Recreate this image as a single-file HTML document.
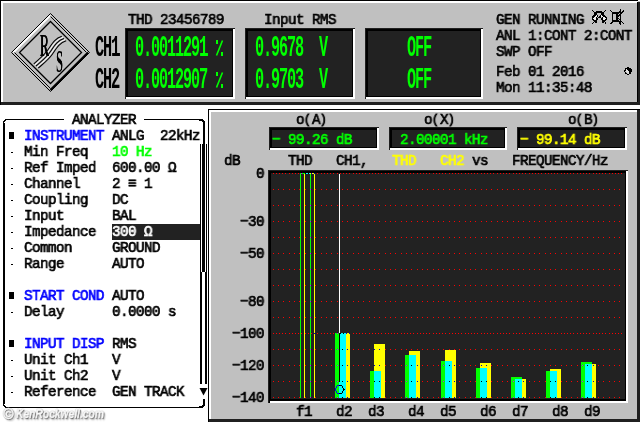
<!DOCTYPE html>
<html><head><meta charset="utf-8"><style>
html,body{margin:0;padding:0;}
body{width:640px;height:422px;overflow:hidden;position:relative;background:#fff;}
.a{position:absolute;}
.t{position:absolute;font-family:"Liberation Mono",monospace;font-weight:normal;font-size:15.2px;line-height:16px;white-space:pre;letter-spacing:-0.609px;-webkit-text-stroke-width:0.7px;transform:scaleX(0.94);transform-origin:0 0;will-change:transform;}
.g{position:absolute;font-family:"Liberation Mono",monospace;font-weight:bold;font-size:30.4px;line-height:32px;white-space:pre;letter-spacing:-2.24px;transform:scaleX(0.5);transform-origin:0 0;will-change:transform;}
.lg{position:absolute;font-family:"Liberation Serif",serif;font-weight:bold;font-size:30.5px;line-height:30px;transform:scaleX(0.41);transform-origin:0 0;will-change:transform;}
.pp{font-size:12px;letter-spacing:1.28px;position:relative;top:-1px;-webkit-text-stroke-width:0.9px;}
.wm{position:absolute;font-family:"Liberation Sans",sans-serif;font-weight:bold;font-style:italic;font-size:13px;line-height:16px;color:#fbfbfb;-webkit-text-stroke:0.5px #f4f4f4;text-shadow:0 0 1px #444,1px 1px 1px #666,2px 2px 2px #aaa;white-space:pre;will-change:transform;}
</style></head><body>
<svg class="a" width="640" height="422" viewBox="0 0 640 422" shape-rendering="crispEdges" style="left:0;top:0"><rect x="0" y="0" width="640" height="422" fill="#ffffff"/><rect x="0" y="0" width="640" height="105" fill="#c0c0c0"/><rect x="0" y="0" width="640" height="1" fill="#000"/><rect x="0" y="0" width="1" height="105" fill="#000"/><rect x="1" y="1" width="636" height="2" fill="#fff"/><rect x="1" y="1" width="2" height="101" fill="#fff"/><rect x="637" y="2" width="3" height="103" fill="#202020"/><rect x="637" y="2" width="1" height="100" fill="#000"/><rect x="1" y="102" width="639" height="3" fill="#202020"/><rect x="125" y="28" width="110" height="71" fill="#222222"/><rect x="125" y="28" width="110" height="3" fill="#000"/><rect x="125" y="28" width="3" height="71" fill="#000"/><rect x="125" y="28" width="110" height="1" fill="#202020"/><rect x="125" y="28" width="1" height="71" fill="#202020"/><rect x="126" y="97" width="109" height="2" fill="#fff"/><rect x="233" y="29" width="2" height="70" fill="#fff"/><rect x="128" y="96" width="105" height="1" fill="#000"/><rect x="232" y="31" width="1" height="66" fill="#000"/><rect x="245" y="28" width="110" height="71" fill="#222222"/><rect x="245" y="28" width="110" height="3" fill="#000"/><rect x="245" y="28" width="3" height="71" fill="#000"/><rect x="245" y="28" width="110" height="1" fill="#202020"/><rect x="245" y="28" width="1" height="71" fill="#202020"/><rect x="246" y="97" width="109" height="2" fill="#fff"/><rect x="353" y="29" width="2" height="70" fill="#fff"/><rect x="248" y="96" width="105" height="1" fill="#000"/><rect x="352" y="31" width="1" height="66" fill="#000"/><rect x="365" y="28" width="118" height="71" fill="#222222"/><rect x="365" y="28" width="118" height="3" fill="#000"/><rect x="365" y="28" width="3" height="71" fill="#000"/><rect x="365" y="28" width="118" height="1" fill="#202020"/><rect x="365" y="28" width="1" height="71" fill="#202020"/><rect x="366" y="97" width="117" height="2" fill="#fff"/><rect x="481" y="29" width="2" height="70" fill="#fff"/><rect x="368" y="96" width="113" height="1" fill="#000"/><rect x="480" y="31" width="1" height="66" fill="#000"/><rect x="216" y="40" width="2" height="4" fill="#00ff00"/><rect x="221" y="52" width="2" height="4" fill="#00ff00"/><path d="M222.5 40.5 L216.5 55.5" stroke="#00ff00" stroke-width="1.6" shape-rendering="auto"/><rect x="216" y="72" width="2" height="4" fill="#00ff00"/><rect x="221" y="84" width="2" height="4" fill="#00ff00"/><path d="M222.5 72.5 L216.5 87.5" stroke="#00ff00" stroke-width="1.6" shape-rendering="auto"/><rect x="208" y="109" width="432" height="313" fill="#c0c0c0"/><rect x="208" y="109" width="432" height="1" fill="#000"/><rect x="208" y="109" width="1" height="313" fill="#000"/><rect x="209" y="110" width="428" height="2" fill="#fff"/><rect x="209" y="110" width="2" height="309" fill="#fff"/><rect x="637" y="110" width="3" height="312" fill="#202020"/><rect x="209" y="419" width="431" height="3" fill="#202020"/><rect x="269" y="127" width="110" height="23" fill="#222222"/><rect x="269" y="127" width="110" height="3" fill="#000"/><rect x="269" y="127" width="3" height="23" fill="#000"/><rect x="269" y="127" width="110" height="1" fill="#202020"/><rect x="269" y="127" width="1" height="23" fill="#202020"/><rect x="270" y="148" width="109" height="2" fill="#fff"/><rect x="377" y="128" width="2" height="22" fill="#fff"/><rect x="272" y="147" width="105" height="1" fill="#000"/><rect x="376" y="130" width="1" height="18" fill="#000"/><rect x="389" y="127" width="118" height="23" fill="#222222"/><rect x="389" y="127" width="118" height="3" fill="#000"/><rect x="389" y="127" width="3" height="23" fill="#000"/><rect x="389" y="127" width="118" height="1" fill="#202020"/><rect x="389" y="127" width="1" height="23" fill="#202020"/><rect x="390" y="148" width="117" height="2" fill="#fff"/><rect x="505" y="128" width="2" height="22" fill="#fff"/><rect x="392" y="147" width="113" height="1" fill="#000"/><rect x="504" y="130" width="1" height="18" fill="#000"/><rect x="517" y="127" width="110" height="23" fill="#222222"/><rect x="517" y="127" width="110" height="3" fill="#000"/><rect x="517" y="127" width="3" height="23" fill="#000"/><rect x="517" y="127" width="110" height="1" fill="#202020"/><rect x="517" y="127" width="1" height="23" fill="#202020"/><rect x="518" y="148" width="109" height="2" fill="#fff"/><rect x="625" y="128" width="2" height="22" fill="#fff"/><rect x="520" y="147" width="105" height="1" fill="#000"/><rect x="624" y="130" width="1" height="18" fill="#000"/><rect x="268" y="170" width="360" height="233" fill="#222222"/><rect x="268" y="170" width="360" height="3" fill="#000"/><rect x="268" y="170" width="3" height="233" fill="#000"/><rect x="268" y="170" width="360" height="1" fill="#202020"/><rect x="268" y="170" width="1" height="233" fill="#202020"/><rect x="270" y="401" width="358" height="2" fill="#fff"/><rect x="626" y="171" width="2" height="232" fill="#fff"/><rect x="271" y="399" width="355" height="2" fill="#000"/><rect x="625" y="173" width="1" height="228" fill="#000"/><rect x="112" y="224" width="89" height="16" fill="#222222"/><rect x="9" y="132" width="5" height="7" fill="#000"/><rect x="11" y="152" width="2" height="1" fill="#000"/><rect x="11" y="168" width="2" height="1" fill="#000"/><rect x="11" y="184" width="2" height="1" fill="#000"/><rect x="11" y="200" width="2" height="1" fill="#000"/><rect x="11" y="216" width="2" height="1" fill="#000"/><rect x="11" y="232" width="2" height="1" fill="#000"/><rect x="11" y="248" width="2" height="1" fill="#000"/><rect x="11" y="264" width="2" height="1" fill="#000"/><rect x="9" y="292" width="5" height="7" fill="#000"/><rect x="11" y="312" width="2" height="1" fill="#000"/><rect x="9" y="340" width="5" height="7" fill="#000"/><rect x="11" y="360" width="2" height="1" fill="#000"/><rect x="11" y="376" width="2" height="1" fill="#000"/><rect x="11" y="392" width="2" height="1" fill="#000"/><rect x="3" y="123" width="2" height="281" fill="#000"/><rect x="8" y="407" width="192" height="1" fill="#000"/><rect x="8" y="119" width="56" height="1" fill="#000"/><rect x="144" y="119" width="56" height="1" fill="#000"/><rect x="203" y="123" width="2" height="21" fill="#000"/><rect x="203" y="399" width="2" height="5" fill="#000"/><path d="M3.5 124 Q3.5 119.5 8 119.5" stroke="#000" fill="none" stroke-width="1.5"/><path d="M199 119.5 Q204 119.5 204 124" stroke="#000" fill="none" stroke-width="2"/><path d="M3.5 403 Q3.5 407.5 8 407.5" stroke="#000" fill="none" stroke-width="1.5"/><path d="M199 407.5 Q204 407.5 204 403" stroke="#000" fill="none" stroke-width="2"/><rect x="200" y="144" width="2" height="240" fill="#000"/><rect x="205" y="144" width="2" height="240" fill="#000"/><rect x="202" y="144" width="3" height="128" fill="#000"/><rect x="201" y="144" width="1" height="128" fill="#fff"/><rect x="205" y="144" width="1" height="128" fill="#fff"/><polygon points="199.5,388 207.5,388 203.5,395.5" fill="#000" shape-rendering="auto"/><rect x="273" y="173" width="1" height="1" fill="#ff0000"/><rect x="276" y="173" width="1" height="1" fill="#ff0000"/><rect x="279" y="173" width="1" height="1" fill="#ff0000"/><rect x="282" y="173" width="1" height="1" fill="#ff0000"/><rect x="285" y="173" width="1" height="1" fill="#ff0000"/><rect x="289" y="173" width="1" height="1" fill="#ff0000"/><rect x="292" y="173" width="1" height="1" fill="#ff0000"/><rect x="295" y="173" width="1" height="1" fill="#ff0000"/><rect x="298" y="173" width="1" height="1" fill="#ff0000"/><rect x="301" y="173" width="1" height="1" fill="#ff0000"/><rect x="305" y="173" width="1" height="1" fill="#ff0000"/><rect x="308" y="173" width="1" height="1" fill="#ff0000"/><rect x="311" y="173" width="1" height="1" fill="#ff0000"/><rect x="314" y="173" width="1" height="1" fill="#ff0000"/><rect x="317" y="173" width="1" height="1" fill="#ff0000"/><rect x="321" y="173" width="1" height="1" fill="#ff0000"/><rect x="324" y="173" width="1" height="1" fill="#ff0000"/><rect x="327" y="173" width="1" height="1" fill="#ff0000"/><rect x="330" y="173" width="1" height="1" fill="#ff0000"/><rect x="333" y="173" width="1" height="1" fill="#ff0000"/><rect x="337" y="173" width="1" height="1" fill="#ff0000"/><rect x="340" y="173" width="1" height="1" fill="#ff0000"/><rect x="343" y="173" width="1" height="1" fill="#ff0000"/><rect x="346" y="173" width="1" height="1" fill="#ff0000"/><rect x="349" y="173" width="1" height="1" fill="#ff0000"/><rect x="353" y="173" width="1" height="1" fill="#ff0000"/><rect x="356" y="173" width="1" height="1" fill="#ff0000"/><rect x="359" y="173" width="1" height="1" fill="#ff0000"/><rect x="362" y="173" width="1" height="1" fill="#ff0000"/><rect x="365" y="173" width="1" height="1" fill="#ff0000"/><rect x="369" y="173" width="1" height="1" fill="#ff0000"/><rect x="372" y="173" width="1" height="1" fill="#ff0000"/><rect x="375" y="173" width="1" height="1" fill="#ff0000"/><rect x="378" y="173" width="1" height="1" fill="#ff0000"/><rect x="381" y="173" width="1" height="1" fill="#ff0000"/><rect x="385" y="173" width="1" height="1" fill="#ff0000"/><rect x="388" y="173" width="1" height="1" fill="#ff0000"/><rect x="391" y="173" width="1" height="1" fill="#ff0000"/><rect x="394" y="173" width="1" height="1" fill="#ff0000"/><rect x="397" y="173" width="1" height="1" fill="#ff0000"/><rect x="401" y="173" width="1" height="1" fill="#ff0000"/><rect x="404" y="173" width="1" height="1" fill="#ff0000"/><rect x="407" y="173" width="1" height="1" fill="#ff0000"/><rect x="410" y="173" width="1" height="1" fill="#ff0000"/><rect x="413" y="173" width="1" height="1" fill="#ff0000"/><rect x="417" y="173" width="1" height="1" fill="#ff0000"/><rect x="420" y="173" width="1" height="1" fill="#ff0000"/><rect x="423" y="173" width="1" height="1" fill="#ff0000"/><rect x="426" y="173" width="1" height="1" fill="#ff0000"/><rect x="429" y="173" width="1" height="1" fill="#ff0000"/><rect x="433" y="173" width="1" height="1" fill="#ff0000"/><rect x="436" y="173" width="1" height="1" fill="#ff0000"/><rect x="439" y="173" width="1" height="1" fill="#ff0000"/><rect x="442" y="173" width="1" height="1" fill="#ff0000"/><rect x="445" y="173" width="1" height="1" fill="#ff0000"/><rect x="449" y="173" width="1" height="1" fill="#ff0000"/><rect x="452" y="173" width="1" height="1" fill="#ff0000"/><rect x="455" y="173" width="1" height="1" fill="#ff0000"/><rect x="458" y="173" width="1" height="1" fill="#ff0000"/><rect x="461" y="173" width="1" height="1" fill="#ff0000"/><rect x="465" y="173" width="1" height="1" fill="#ff0000"/><rect x="468" y="173" width="1" height="1" fill="#ff0000"/><rect x="471" y="173" width="1" height="1" fill="#ff0000"/><rect x="474" y="173" width="1" height="1" fill="#ff0000"/><rect x="477" y="173" width="1" height="1" fill="#ff0000"/><rect x="481" y="173" width="1" height="1" fill="#ff0000"/><rect x="484" y="173" width="1" height="1" fill="#ff0000"/><rect x="487" y="173" width="1" height="1" fill="#ff0000"/><rect x="490" y="173" width="1" height="1" fill="#ff0000"/><rect x="493" y="173" width="1" height="1" fill="#ff0000"/><rect x="497" y="173" width="1" height="1" fill="#ff0000"/><rect x="500" y="173" width="1" height="1" fill="#ff0000"/><rect x="503" y="173" width="1" height="1" fill="#ff0000"/><rect x="506" y="173" width="1" height="1" fill="#ff0000"/><rect x="509" y="173" width="1" height="1" fill="#ff0000"/><rect x="513" y="173" width="1" height="1" fill="#ff0000"/><rect x="516" y="173" width="1" height="1" fill="#ff0000"/><rect x="519" y="173" width="1" height="1" fill="#ff0000"/><rect x="522" y="173" width="1" height="1" fill="#ff0000"/><rect x="525" y="173" width="1" height="1" fill="#ff0000"/><rect x="529" y="173" width="1" height="1" fill="#ff0000"/><rect x="532" y="173" width="1" height="1" fill="#ff0000"/><rect x="535" y="173" width="1" height="1" fill="#ff0000"/><rect x="538" y="173" width="1" height="1" fill="#ff0000"/><rect x="541" y="173" width="1" height="1" fill="#ff0000"/><rect x="545" y="173" width="1" height="1" fill="#ff0000"/><rect x="548" y="173" width="1" height="1" fill="#ff0000"/><rect x="551" y="173" width="1" height="1" fill="#ff0000"/><rect x="554" y="173" width="1" height="1" fill="#ff0000"/><rect x="557" y="173" width="1" height="1" fill="#ff0000"/><rect x="561" y="173" width="1" height="1" fill="#ff0000"/><rect x="564" y="173" width="1" height="1" fill="#ff0000"/><rect x="567" y="173" width="1" height="1" fill="#ff0000"/><rect x="570" y="173" width="1" height="1" fill="#ff0000"/><rect x="573" y="173" width="1" height="1" fill="#ff0000"/><rect x="577" y="173" width="1" height="1" fill="#ff0000"/><rect x="580" y="173" width="1" height="1" fill="#ff0000"/><rect x="583" y="173" width="1" height="1" fill="#ff0000"/><rect x="586" y="173" width="1" height="1" fill="#ff0000"/><rect x="589" y="173" width="1" height="1" fill="#ff0000"/><rect x="593" y="173" width="1" height="1" fill="#ff0000"/><rect x="596" y="173" width="1" height="1" fill="#ff0000"/><rect x="599" y="173" width="1" height="1" fill="#ff0000"/><rect x="602" y="173" width="1" height="1" fill="#ff0000"/><rect x="605" y="173" width="1" height="1" fill="#ff0000"/><rect x="609" y="173" width="1" height="1" fill="#ff0000"/><rect x="612" y="173" width="1" height="1" fill="#ff0000"/><rect x="615" y="173" width="1" height="1" fill="#ff0000"/><rect x="618" y="173" width="1" height="1" fill="#ff0000"/><rect x="621" y="173" width="1" height="1" fill="#ff0000"/><rect x="273" y="189" width="1" height="1" fill="#ff0000"/><rect x="278" y="189" width="1" height="1" fill="#ff0000"/><rect x="283" y="189" width="1" height="1" fill="#ff0000"/><rect x="289" y="189" width="1" height="1" fill="#ff0000"/><rect x="294" y="189" width="1" height="1" fill="#ff0000"/><rect x="299" y="189" width="1" height="1" fill="#ff0000"/><rect x="305" y="189" width="1" height="1" fill="#ff0000"/><rect x="310" y="189" width="1" height="1" fill="#ff0000"/><rect x="315" y="189" width="1" height="1" fill="#ff0000"/><rect x="321" y="189" width="1" height="1" fill="#ff0000"/><rect x="326" y="189" width="1" height="1" fill="#ff0000"/><rect x="331" y="189" width="1" height="1" fill="#ff0000"/><rect x="337" y="189" width="1" height="1" fill="#ff0000"/><rect x="342" y="189" width="1" height="1" fill="#ff0000"/><rect x="347" y="189" width="1" height="1" fill="#ff0000"/><rect x="353" y="189" width="1" height="1" fill="#ff0000"/><rect x="358" y="189" width="1" height="1" fill="#ff0000"/><rect x="363" y="189" width="1" height="1" fill="#ff0000"/><rect x="369" y="189" width="1" height="1" fill="#ff0000"/><rect x="374" y="189" width="1" height="1" fill="#ff0000"/><rect x="379" y="189" width="1" height="1" fill="#ff0000"/><rect x="385" y="189" width="1" height="1" fill="#ff0000"/><rect x="390" y="189" width="1" height="1" fill="#ff0000"/><rect x="395" y="189" width="1" height="1" fill="#ff0000"/><rect x="401" y="189" width="1" height="1" fill="#ff0000"/><rect x="406" y="189" width="1" height="1" fill="#ff0000"/><rect x="411" y="189" width="1" height="1" fill="#ff0000"/><rect x="417" y="189" width="1" height="1" fill="#ff0000"/><rect x="422" y="189" width="1" height="1" fill="#ff0000"/><rect x="427" y="189" width="1" height="1" fill="#ff0000"/><rect x="433" y="189" width="1" height="1" fill="#ff0000"/><rect x="438" y="189" width="1" height="1" fill="#ff0000"/><rect x="443" y="189" width="1" height="1" fill="#ff0000"/><rect x="449" y="189" width="1" height="1" fill="#ff0000"/><rect x="454" y="189" width="1" height="1" fill="#ff0000"/><rect x="459" y="189" width="1" height="1" fill="#ff0000"/><rect x="465" y="189" width="1" height="1" fill="#ff0000"/><rect x="470" y="189" width="1" height="1" fill="#ff0000"/><rect x="475" y="189" width="1" height="1" fill="#ff0000"/><rect x="481" y="189" width="1" height="1" fill="#ff0000"/><rect x="486" y="189" width="1" height="1" fill="#ff0000"/><rect x="491" y="189" width="1" height="1" fill="#ff0000"/><rect x="497" y="189" width="1" height="1" fill="#ff0000"/><rect x="502" y="189" width="1" height="1" fill="#ff0000"/><rect x="507" y="189" width="1" height="1" fill="#ff0000"/><rect x="513" y="189" width="1" height="1" fill="#ff0000"/><rect x="518" y="189" width="1" height="1" fill="#ff0000"/><rect x="523" y="189" width="1" height="1" fill="#ff0000"/><rect x="529" y="189" width="1" height="1" fill="#ff0000"/><rect x="534" y="189" width="1" height="1" fill="#ff0000"/><rect x="539" y="189" width="1" height="1" fill="#ff0000"/><rect x="545" y="189" width="1" height="1" fill="#ff0000"/><rect x="550" y="189" width="1" height="1" fill="#ff0000"/><rect x="555" y="189" width="1" height="1" fill="#ff0000"/><rect x="561" y="189" width="1" height="1" fill="#ff0000"/><rect x="566" y="189" width="1" height="1" fill="#ff0000"/><rect x="571" y="189" width="1" height="1" fill="#ff0000"/><rect x="577" y="189" width="1" height="1" fill="#ff0000"/><rect x="582" y="189" width="1" height="1" fill="#ff0000"/><rect x="587" y="189" width="1" height="1" fill="#ff0000"/><rect x="593" y="189" width="1" height="1" fill="#ff0000"/><rect x="598" y="189" width="1" height="1" fill="#ff0000"/><rect x="603" y="189" width="1" height="1" fill="#ff0000"/><rect x="609" y="189" width="1" height="1" fill="#ff0000"/><rect x="614" y="189" width="1" height="1" fill="#ff0000"/><rect x="619" y="189" width="1" height="1" fill="#ff0000"/><rect x="273" y="205" width="1" height="1" fill="#ff0000"/><rect x="278" y="205" width="1" height="1" fill="#ff0000"/><rect x="283" y="205" width="1" height="1" fill="#ff0000"/><rect x="289" y="205" width="1" height="1" fill="#ff0000"/><rect x="294" y="205" width="1" height="1" fill="#ff0000"/><rect x="299" y="205" width="1" height="1" fill="#ff0000"/><rect x="305" y="205" width="1" height="1" fill="#ff0000"/><rect x="310" y="205" width="1" height="1" fill="#ff0000"/><rect x="315" y="205" width="1" height="1" fill="#ff0000"/><rect x="321" y="205" width="1" height="1" fill="#ff0000"/><rect x="326" y="205" width="1" height="1" fill="#ff0000"/><rect x="331" y="205" width="1" height="1" fill="#ff0000"/><rect x="337" y="205" width="1" height="1" fill="#ff0000"/><rect x="342" y="205" width="1" height="1" fill="#ff0000"/><rect x="347" y="205" width="1" height="1" fill="#ff0000"/><rect x="353" y="205" width="1" height="1" fill="#ff0000"/><rect x="358" y="205" width="1" height="1" fill="#ff0000"/><rect x="363" y="205" width="1" height="1" fill="#ff0000"/><rect x="369" y="205" width="1" height="1" fill="#ff0000"/><rect x="374" y="205" width="1" height="1" fill="#ff0000"/><rect x="379" y="205" width="1" height="1" fill="#ff0000"/><rect x="385" y="205" width="1" height="1" fill="#ff0000"/><rect x="390" y="205" width="1" height="1" fill="#ff0000"/><rect x="395" y="205" width="1" height="1" fill="#ff0000"/><rect x="401" y="205" width="1" height="1" fill="#ff0000"/><rect x="406" y="205" width="1" height="1" fill="#ff0000"/><rect x="411" y="205" width="1" height="1" fill="#ff0000"/><rect x="417" y="205" width="1" height="1" fill="#ff0000"/><rect x="422" y="205" width="1" height="1" fill="#ff0000"/><rect x="427" y="205" width="1" height="1" fill="#ff0000"/><rect x="433" y="205" width="1" height="1" fill="#ff0000"/><rect x="438" y="205" width="1" height="1" fill="#ff0000"/><rect x="443" y="205" width="1" height="1" fill="#ff0000"/><rect x="449" y="205" width="1" height="1" fill="#ff0000"/><rect x="454" y="205" width="1" height="1" fill="#ff0000"/><rect x="459" y="205" width="1" height="1" fill="#ff0000"/><rect x="465" y="205" width="1" height="1" fill="#ff0000"/><rect x="470" y="205" width="1" height="1" fill="#ff0000"/><rect x="475" y="205" width="1" height="1" fill="#ff0000"/><rect x="481" y="205" width="1" height="1" fill="#ff0000"/><rect x="486" y="205" width="1" height="1" fill="#ff0000"/><rect x="491" y="205" width="1" height="1" fill="#ff0000"/><rect x="497" y="205" width="1" height="1" fill="#ff0000"/><rect x="502" y="205" width="1" height="1" fill="#ff0000"/><rect x="507" y="205" width="1" height="1" fill="#ff0000"/><rect x="513" y="205" width="1" height="1" fill="#ff0000"/><rect x="518" y="205" width="1" height="1" fill="#ff0000"/><rect x="523" y="205" width="1" height="1" fill="#ff0000"/><rect x="529" y="205" width="1" height="1" fill="#ff0000"/><rect x="534" y="205" width="1" height="1" fill="#ff0000"/><rect x="539" y="205" width="1" height="1" fill="#ff0000"/><rect x="545" y="205" width="1" height="1" fill="#ff0000"/><rect x="550" y="205" width="1" height="1" fill="#ff0000"/><rect x="555" y="205" width="1" height="1" fill="#ff0000"/><rect x="561" y="205" width="1" height="1" fill="#ff0000"/><rect x="566" y="205" width="1" height="1" fill="#ff0000"/><rect x="571" y="205" width="1" height="1" fill="#ff0000"/><rect x="577" y="205" width="1" height="1" fill="#ff0000"/><rect x="582" y="205" width="1" height="1" fill="#ff0000"/><rect x="587" y="205" width="1" height="1" fill="#ff0000"/><rect x="593" y="205" width="1" height="1" fill="#ff0000"/><rect x="598" y="205" width="1" height="1" fill="#ff0000"/><rect x="603" y="205" width="1" height="1" fill="#ff0000"/><rect x="609" y="205" width="1" height="1" fill="#ff0000"/><rect x="614" y="205" width="1" height="1" fill="#ff0000"/><rect x="619" y="205" width="1" height="1" fill="#ff0000"/><rect x="273" y="221" width="1" height="1" fill="#ff0000"/><rect x="278" y="221" width="1" height="1" fill="#ff0000"/><rect x="283" y="221" width="1" height="1" fill="#ff0000"/><rect x="289" y="221" width="1" height="1" fill="#ff0000"/><rect x="294" y="221" width="1" height="1" fill="#ff0000"/><rect x="299" y="221" width="1" height="1" fill="#ff0000"/><rect x="305" y="221" width="1" height="1" fill="#ff0000"/><rect x="310" y="221" width="1" height="1" fill="#ff0000"/><rect x="315" y="221" width="1" height="1" fill="#ff0000"/><rect x="321" y="221" width="1" height="1" fill="#ff0000"/><rect x="326" y="221" width="1" height="1" fill="#ff0000"/><rect x="331" y="221" width="1" height="1" fill="#ff0000"/><rect x="337" y="221" width="1" height="1" fill="#ff0000"/><rect x="342" y="221" width="1" height="1" fill="#ff0000"/><rect x="347" y="221" width="1" height="1" fill="#ff0000"/><rect x="353" y="221" width="1" height="1" fill="#ff0000"/><rect x="358" y="221" width="1" height="1" fill="#ff0000"/><rect x="363" y="221" width="1" height="1" fill="#ff0000"/><rect x="369" y="221" width="1" height="1" fill="#ff0000"/><rect x="374" y="221" width="1" height="1" fill="#ff0000"/><rect x="379" y="221" width="1" height="1" fill="#ff0000"/><rect x="385" y="221" width="1" height="1" fill="#ff0000"/><rect x="390" y="221" width="1" height="1" fill="#ff0000"/><rect x="395" y="221" width="1" height="1" fill="#ff0000"/><rect x="401" y="221" width="1" height="1" fill="#ff0000"/><rect x="406" y="221" width="1" height="1" fill="#ff0000"/><rect x="411" y="221" width="1" height="1" fill="#ff0000"/><rect x="417" y="221" width="1" height="1" fill="#ff0000"/><rect x="422" y="221" width="1" height="1" fill="#ff0000"/><rect x="427" y="221" width="1" height="1" fill="#ff0000"/><rect x="433" y="221" width="1" height="1" fill="#ff0000"/><rect x="438" y="221" width="1" height="1" fill="#ff0000"/><rect x="443" y="221" width="1" height="1" fill="#ff0000"/><rect x="449" y="221" width="1" height="1" fill="#ff0000"/><rect x="454" y="221" width="1" height="1" fill="#ff0000"/><rect x="459" y="221" width="1" height="1" fill="#ff0000"/><rect x="465" y="221" width="1" height="1" fill="#ff0000"/><rect x="470" y="221" width="1" height="1" fill="#ff0000"/><rect x="475" y="221" width="1" height="1" fill="#ff0000"/><rect x="481" y="221" width="1" height="1" fill="#ff0000"/><rect x="486" y="221" width="1" height="1" fill="#ff0000"/><rect x="491" y="221" width="1" height="1" fill="#ff0000"/><rect x="497" y="221" width="1" height="1" fill="#ff0000"/><rect x="502" y="221" width="1" height="1" fill="#ff0000"/><rect x="507" y="221" width="1" height="1" fill="#ff0000"/><rect x="513" y="221" width="1" height="1" fill="#ff0000"/><rect x="518" y="221" width="1" height="1" fill="#ff0000"/><rect x="523" y="221" width="1" height="1" fill="#ff0000"/><rect x="529" y="221" width="1" height="1" fill="#ff0000"/><rect x="534" y="221" width="1" height="1" fill="#ff0000"/><rect x="539" y="221" width="1" height="1" fill="#ff0000"/><rect x="545" y="221" width="1" height="1" fill="#ff0000"/><rect x="550" y="221" width="1" height="1" fill="#ff0000"/><rect x="555" y="221" width="1" height="1" fill="#ff0000"/><rect x="561" y="221" width="1" height="1" fill="#ff0000"/><rect x="566" y="221" width="1" height="1" fill="#ff0000"/><rect x="571" y="221" width="1" height="1" fill="#ff0000"/><rect x="577" y="221" width="1" height="1" fill="#ff0000"/><rect x="582" y="221" width="1" height="1" fill="#ff0000"/><rect x="587" y="221" width="1" height="1" fill="#ff0000"/><rect x="593" y="221" width="1" height="1" fill="#ff0000"/><rect x="598" y="221" width="1" height="1" fill="#ff0000"/><rect x="603" y="221" width="1" height="1" fill="#ff0000"/><rect x="609" y="221" width="1" height="1" fill="#ff0000"/><rect x="614" y="221" width="1" height="1" fill="#ff0000"/><rect x="619" y="221" width="1" height="1" fill="#ff0000"/><rect x="273" y="237" width="1" height="1" fill="#ff0000"/><rect x="278" y="237" width="1" height="1" fill="#ff0000"/><rect x="283" y="237" width="1" height="1" fill="#ff0000"/><rect x="289" y="237" width="1" height="1" fill="#ff0000"/><rect x="294" y="237" width="1" height="1" fill="#ff0000"/><rect x="299" y="237" width="1" height="1" fill="#ff0000"/><rect x="305" y="237" width="1" height="1" fill="#ff0000"/><rect x="310" y="237" width="1" height="1" fill="#ff0000"/><rect x="315" y="237" width="1" height="1" fill="#ff0000"/><rect x="321" y="237" width="1" height="1" fill="#ff0000"/><rect x="326" y="237" width="1" height="1" fill="#ff0000"/><rect x="331" y="237" width="1" height="1" fill="#ff0000"/><rect x="337" y="237" width="1" height="1" fill="#ff0000"/><rect x="342" y="237" width="1" height="1" fill="#ff0000"/><rect x="347" y="237" width="1" height="1" fill="#ff0000"/><rect x="353" y="237" width="1" height="1" fill="#ff0000"/><rect x="358" y="237" width="1" height="1" fill="#ff0000"/><rect x="363" y="237" width="1" height="1" fill="#ff0000"/><rect x="369" y="237" width="1" height="1" fill="#ff0000"/><rect x="374" y="237" width="1" height="1" fill="#ff0000"/><rect x="379" y="237" width="1" height="1" fill="#ff0000"/><rect x="385" y="237" width="1" height="1" fill="#ff0000"/><rect x="390" y="237" width="1" height="1" fill="#ff0000"/><rect x="395" y="237" width="1" height="1" fill="#ff0000"/><rect x="401" y="237" width="1" height="1" fill="#ff0000"/><rect x="406" y="237" width="1" height="1" fill="#ff0000"/><rect x="411" y="237" width="1" height="1" fill="#ff0000"/><rect x="417" y="237" width="1" height="1" fill="#ff0000"/><rect x="422" y="237" width="1" height="1" fill="#ff0000"/><rect x="427" y="237" width="1" height="1" fill="#ff0000"/><rect x="433" y="237" width="1" height="1" fill="#ff0000"/><rect x="438" y="237" width="1" height="1" fill="#ff0000"/><rect x="443" y="237" width="1" height="1" fill="#ff0000"/><rect x="449" y="237" width="1" height="1" fill="#ff0000"/><rect x="454" y="237" width="1" height="1" fill="#ff0000"/><rect x="459" y="237" width="1" height="1" fill="#ff0000"/><rect x="465" y="237" width="1" height="1" fill="#ff0000"/><rect x="470" y="237" width="1" height="1" fill="#ff0000"/><rect x="475" y="237" width="1" height="1" fill="#ff0000"/><rect x="481" y="237" width="1" height="1" fill="#ff0000"/><rect x="486" y="237" width="1" height="1" fill="#ff0000"/><rect x="491" y="237" width="1" height="1" fill="#ff0000"/><rect x="497" y="237" width="1" height="1" fill="#ff0000"/><rect x="502" y="237" width="1" height="1" fill="#ff0000"/><rect x="507" y="237" width="1" height="1" fill="#ff0000"/><rect x="513" y="237" width="1" height="1" fill="#ff0000"/><rect x="518" y="237" width="1" height="1" fill="#ff0000"/><rect x="523" y="237" width="1" height="1" fill="#ff0000"/><rect x="529" y="237" width="1" height="1" fill="#ff0000"/><rect x="534" y="237" width="1" height="1" fill="#ff0000"/><rect x="539" y="237" width="1" height="1" fill="#ff0000"/><rect x="545" y="237" width="1" height="1" fill="#ff0000"/><rect x="550" y="237" width="1" height="1" fill="#ff0000"/><rect x="555" y="237" width="1" height="1" fill="#ff0000"/><rect x="561" y="237" width="1" height="1" fill="#ff0000"/><rect x="566" y="237" width="1" height="1" fill="#ff0000"/><rect x="571" y="237" width="1" height="1" fill="#ff0000"/><rect x="577" y="237" width="1" height="1" fill="#ff0000"/><rect x="582" y="237" width="1" height="1" fill="#ff0000"/><rect x="587" y="237" width="1" height="1" fill="#ff0000"/><rect x="593" y="237" width="1" height="1" fill="#ff0000"/><rect x="598" y="237" width="1" height="1" fill="#ff0000"/><rect x="603" y="237" width="1" height="1" fill="#ff0000"/><rect x="609" y="237" width="1" height="1" fill="#ff0000"/><rect x="614" y="237" width="1" height="1" fill="#ff0000"/><rect x="619" y="237" width="1" height="1" fill="#ff0000"/><rect x="273" y="253" width="1" height="1" fill="#ff0000"/><rect x="278" y="253" width="1" height="1" fill="#ff0000"/><rect x="283" y="253" width="1" height="1" fill="#ff0000"/><rect x="289" y="253" width="1" height="1" fill="#ff0000"/><rect x="294" y="253" width="1" height="1" fill="#ff0000"/><rect x="299" y="253" width="1" height="1" fill="#ff0000"/><rect x="305" y="253" width="1" height="1" fill="#ff0000"/><rect x="310" y="253" width="1" height="1" fill="#ff0000"/><rect x="315" y="253" width="1" height="1" fill="#ff0000"/><rect x="321" y="253" width="1" height="1" fill="#ff0000"/><rect x="326" y="253" width="1" height="1" fill="#ff0000"/><rect x="331" y="253" width="1" height="1" fill="#ff0000"/><rect x="337" y="253" width="1" height="1" fill="#ff0000"/><rect x="342" y="253" width="1" height="1" fill="#ff0000"/><rect x="347" y="253" width="1" height="1" fill="#ff0000"/><rect x="353" y="253" width="1" height="1" fill="#ff0000"/><rect x="358" y="253" width="1" height="1" fill="#ff0000"/><rect x="363" y="253" width="1" height="1" fill="#ff0000"/><rect x="369" y="253" width="1" height="1" fill="#ff0000"/><rect x="374" y="253" width="1" height="1" fill="#ff0000"/><rect x="379" y="253" width="1" height="1" fill="#ff0000"/><rect x="385" y="253" width="1" height="1" fill="#ff0000"/><rect x="390" y="253" width="1" height="1" fill="#ff0000"/><rect x="395" y="253" width="1" height="1" fill="#ff0000"/><rect x="401" y="253" width="1" height="1" fill="#ff0000"/><rect x="406" y="253" width="1" height="1" fill="#ff0000"/><rect x="411" y="253" width="1" height="1" fill="#ff0000"/><rect x="417" y="253" width="1" height="1" fill="#ff0000"/><rect x="422" y="253" width="1" height="1" fill="#ff0000"/><rect x="427" y="253" width="1" height="1" fill="#ff0000"/><rect x="433" y="253" width="1" height="1" fill="#ff0000"/><rect x="438" y="253" width="1" height="1" fill="#ff0000"/><rect x="443" y="253" width="1" height="1" fill="#ff0000"/><rect x="449" y="253" width="1" height="1" fill="#ff0000"/><rect x="454" y="253" width="1" height="1" fill="#ff0000"/><rect x="459" y="253" width="1" height="1" fill="#ff0000"/><rect x="465" y="253" width="1" height="1" fill="#ff0000"/><rect x="470" y="253" width="1" height="1" fill="#ff0000"/><rect x="475" y="253" width="1" height="1" fill="#ff0000"/><rect x="481" y="253" width="1" height="1" fill="#ff0000"/><rect x="486" y="253" width="1" height="1" fill="#ff0000"/><rect x="491" y="253" width="1" height="1" fill="#ff0000"/><rect x="497" y="253" width="1" height="1" fill="#ff0000"/><rect x="502" y="253" width="1" height="1" fill="#ff0000"/><rect x="507" y="253" width="1" height="1" fill="#ff0000"/><rect x="513" y="253" width="1" height="1" fill="#ff0000"/><rect x="518" y="253" width="1" height="1" fill="#ff0000"/><rect x="523" y="253" width="1" height="1" fill="#ff0000"/><rect x="529" y="253" width="1" height="1" fill="#ff0000"/><rect x="534" y="253" width="1" height="1" fill="#ff0000"/><rect x="539" y="253" width="1" height="1" fill="#ff0000"/><rect x="545" y="253" width="1" height="1" fill="#ff0000"/><rect x="550" y="253" width="1" height="1" fill="#ff0000"/><rect x="555" y="253" width="1" height="1" fill="#ff0000"/><rect x="561" y="253" width="1" height="1" fill="#ff0000"/><rect x="566" y="253" width="1" height="1" fill="#ff0000"/><rect x="571" y="253" width="1" height="1" fill="#ff0000"/><rect x="577" y="253" width="1" height="1" fill="#ff0000"/><rect x="582" y="253" width="1" height="1" fill="#ff0000"/><rect x="587" y="253" width="1" height="1" fill="#ff0000"/><rect x="593" y="253" width="1" height="1" fill="#ff0000"/><rect x="598" y="253" width="1" height="1" fill="#ff0000"/><rect x="603" y="253" width="1" height="1" fill="#ff0000"/><rect x="609" y="253" width="1" height="1" fill="#ff0000"/><rect x="614" y="253" width="1" height="1" fill="#ff0000"/><rect x="619" y="253" width="1" height="1" fill="#ff0000"/><rect x="273" y="269" width="1" height="1" fill="#ff0000"/><rect x="278" y="269" width="1" height="1" fill="#ff0000"/><rect x="283" y="269" width="1" height="1" fill="#ff0000"/><rect x="289" y="269" width="1" height="1" fill="#ff0000"/><rect x="294" y="269" width="1" height="1" fill="#ff0000"/><rect x="299" y="269" width="1" height="1" fill="#ff0000"/><rect x="305" y="269" width="1" height="1" fill="#ff0000"/><rect x="310" y="269" width="1" height="1" fill="#ff0000"/><rect x="315" y="269" width="1" height="1" fill="#ff0000"/><rect x="321" y="269" width="1" height="1" fill="#ff0000"/><rect x="326" y="269" width="1" height="1" fill="#ff0000"/><rect x="331" y="269" width="1" height="1" fill="#ff0000"/><rect x="337" y="269" width="1" height="1" fill="#ff0000"/><rect x="342" y="269" width="1" height="1" fill="#ff0000"/><rect x="347" y="269" width="1" height="1" fill="#ff0000"/><rect x="353" y="269" width="1" height="1" fill="#ff0000"/><rect x="358" y="269" width="1" height="1" fill="#ff0000"/><rect x="363" y="269" width="1" height="1" fill="#ff0000"/><rect x="369" y="269" width="1" height="1" fill="#ff0000"/><rect x="374" y="269" width="1" height="1" fill="#ff0000"/><rect x="379" y="269" width="1" height="1" fill="#ff0000"/><rect x="385" y="269" width="1" height="1" fill="#ff0000"/><rect x="390" y="269" width="1" height="1" fill="#ff0000"/><rect x="395" y="269" width="1" height="1" fill="#ff0000"/><rect x="401" y="269" width="1" height="1" fill="#ff0000"/><rect x="406" y="269" width="1" height="1" fill="#ff0000"/><rect x="411" y="269" width="1" height="1" fill="#ff0000"/><rect x="417" y="269" width="1" height="1" fill="#ff0000"/><rect x="422" y="269" width="1" height="1" fill="#ff0000"/><rect x="427" y="269" width="1" height="1" fill="#ff0000"/><rect x="433" y="269" width="1" height="1" fill="#ff0000"/><rect x="438" y="269" width="1" height="1" fill="#ff0000"/><rect x="443" y="269" width="1" height="1" fill="#ff0000"/><rect x="449" y="269" width="1" height="1" fill="#ff0000"/><rect x="454" y="269" width="1" height="1" fill="#ff0000"/><rect x="459" y="269" width="1" height="1" fill="#ff0000"/><rect x="465" y="269" width="1" height="1" fill="#ff0000"/><rect x="470" y="269" width="1" height="1" fill="#ff0000"/><rect x="475" y="269" width="1" height="1" fill="#ff0000"/><rect x="481" y="269" width="1" height="1" fill="#ff0000"/><rect x="486" y="269" width="1" height="1" fill="#ff0000"/><rect x="491" y="269" width="1" height="1" fill="#ff0000"/><rect x="497" y="269" width="1" height="1" fill="#ff0000"/><rect x="502" y="269" width="1" height="1" fill="#ff0000"/><rect x="507" y="269" width="1" height="1" fill="#ff0000"/><rect x="513" y="269" width="1" height="1" fill="#ff0000"/><rect x="518" y="269" width="1" height="1" fill="#ff0000"/><rect x="523" y="269" width="1" height="1" fill="#ff0000"/><rect x="529" y="269" width="1" height="1" fill="#ff0000"/><rect x="534" y="269" width="1" height="1" fill="#ff0000"/><rect x="539" y="269" width="1" height="1" fill="#ff0000"/><rect x="545" y="269" width="1" height="1" fill="#ff0000"/><rect x="550" y="269" width="1" height="1" fill="#ff0000"/><rect x="555" y="269" width="1" height="1" fill="#ff0000"/><rect x="561" y="269" width="1" height="1" fill="#ff0000"/><rect x="566" y="269" width="1" height="1" fill="#ff0000"/><rect x="571" y="269" width="1" height="1" fill="#ff0000"/><rect x="577" y="269" width="1" height="1" fill="#ff0000"/><rect x="582" y="269" width="1" height="1" fill="#ff0000"/><rect x="587" y="269" width="1" height="1" fill="#ff0000"/><rect x="593" y="269" width="1" height="1" fill="#ff0000"/><rect x="598" y="269" width="1" height="1" fill="#ff0000"/><rect x="603" y="269" width="1" height="1" fill="#ff0000"/><rect x="609" y="269" width="1" height="1" fill="#ff0000"/><rect x="614" y="269" width="1" height="1" fill="#ff0000"/><rect x="619" y="269" width="1" height="1" fill="#ff0000"/><rect x="273" y="285" width="1" height="1" fill="#ff0000"/><rect x="278" y="285" width="1" height="1" fill="#ff0000"/><rect x="283" y="285" width="1" height="1" fill="#ff0000"/><rect x="289" y="285" width="1" height="1" fill="#ff0000"/><rect x="294" y="285" width="1" height="1" fill="#ff0000"/><rect x="299" y="285" width="1" height="1" fill="#ff0000"/><rect x="305" y="285" width="1" height="1" fill="#ff0000"/><rect x="310" y="285" width="1" height="1" fill="#ff0000"/><rect x="315" y="285" width="1" height="1" fill="#ff0000"/><rect x="321" y="285" width="1" height="1" fill="#ff0000"/><rect x="326" y="285" width="1" height="1" fill="#ff0000"/><rect x="331" y="285" width="1" height="1" fill="#ff0000"/><rect x="337" y="285" width="1" height="1" fill="#ff0000"/><rect x="342" y="285" width="1" height="1" fill="#ff0000"/><rect x="347" y="285" width="1" height="1" fill="#ff0000"/><rect x="353" y="285" width="1" height="1" fill="#ff0000"/><rect x="358" y="285" width="1" height="1" fill="#ff0000"/><rect x="363" y="285" width="1" height="1" fill="#ff0000"/><rect x="369" y="285" width="1" height="1" fill="#ff0000"/><rect x="374" y="285" width="1" height="1" fill="#ff0000"/><rect x="379" y="285" width="1" height="1" fill="#ff0000"/><rect x="385" y="285" width="1" height="1" fill="#ff0000"/><rect x="390" y="285" width="1" height="1" fill="#ff0000"/><rect x="395" y="285" width="1" height="1" fill="#ff0000"/><rect x="401" y="285" width="1" height="1" fill="#ff0000"/><rect x="406" y="285" width="1" height="1" fill="#ff0000"/><rect x="411" y="285" width="1" height="1" fill="#ff0000"/><rect x="417" y="285" width="1" height="1" fill="#ff0000"/><rect x="422" y="285" width="1" height="1" fill="#ff0000"/><rect x="427" y="285" width="1" height="1" fill="#ff0000"/><rect x="433" y="285" width="1" height="1" fill="#ff0000"/><rect x="438" y="285" width="1" height="1" fill="#ff0000"/><rect x="443" y="285" width="1" height="1" fill="#ff0000"/><rect x="449" y="285" width="1" height="1" fill="#ff0000"/><rect x="454" y="285" width="1" height="1" fill="#ff0000"/><rect x="459" y="285" width="1" height="1" fill="#ff0000"/><rect x="465" y="285" width="1" height="1" fill="#ff0000"/><rect x="470" y="285" width="1" height="1" fill="#ff0000"/><rect x="475" y="285" width="1" height="1" fill="#ff0000"/><rect x="481" y="285" width="1" height="1" fill="#ff0000"/><rect x="486" y="285" width="1" height="1" fill="#ff0000"/><rect x="491" y="285" width="1" height="1" fill="#ff0000"/><rect x="497" y="285" width="1" height="1" fill="#ff0000"/><rect x="502" y="285" width="1" height="1" fill="#ff0000"/><rect x="507" y="285" width="1" height="1" fill="#ff0000"/><rect x="513" y="285" width="1" height="1" fill="#ff0000"/><rect x="518" y="285" width="1" height="1" fill="#ff0000"/><rect x="523" y="285" width="1" height="1" fill="#ff0000"/><rect x="529" y="285" width="1" height="1" fill="#ff0000"/><rect x="534" y="285" width="1" height="1" fill="#ff0000"/><rect x="539" y="285" width="1" height="1" fill="#ff0000"/><rect x="545" y="285" width="1" height="1" fill="#ff0000"/><rect x="550" y="285" width="1" height="1" fill="#ff0000"/><rect x="555" y="285" width="1" height="1" fill="#ff0000"/><rect x="561" y="285" width="1" height="1" fill="#ff0000"/><rect x="566" y="285" width="1" height="1" fill="#ff0000"/><rect x="571" y="285" width="1" height="1" fill="#ff0000"/><rect x="577" y="285" width="1" height="1" fill="#ff0000"/><rect x="582" y="285" width="1" height="1" fill="#ff0000"/><rect x="587" y="285" width="1" height="1" fill="#ff0000"/><rect x="593" y="285" width="1" height="1" fill="#ff0000"/><rect x="598" y="285" width="1" height="1" fill="#ff0000"/><rect x="603" y="285" width="1" height="1" fill="#ff0000"/><rect x="609" y="285" width="1" height="1" fill="#ff0000"/><rect x="614" y="285" width="1" height="1" fill="#ff0000"/><rect x="619" y="285" width="1" height="1" fill="#ff0000"/><rect x="273" y="301" width="1" height="1" fill="#ff0000"/><rect x="278" y="301" width="1" height="1" fill="#ff0000"/><rect x="283" y="301" width="1" height="1" fill="#ff0000"/><rect x="289" y="301" width="1" height="1" fill="#ff0000"/><rect x="294" y="301" width="1" height="1" fill="#ff0000"/><rect x="299" y="301" width="1" height="1" fill="#ff0000"/><rect x="305" y="301" width="1" height="1" fill="#ff0000"/><rect x="310" y="301" width="1" height="1" fill="#ff0000"/><rect x="315" y="301" width="1" height="1" fill="#ff0000"/><rect x="321" y="301" width="1" height="1" fill="#ff0000"/><rect x="326" y="301" width="1" height="1" fill="#ff0000"/><rect x="331" y="301" width="1" height="1" fill="#ff0000"/><rect x="337" y="301" width="1" height="1" fill="#ff0000"/><rect x="342" y="301" width="1" height="1" fill="#ff0000"/><rect x="347" y="301" width="1" height="1" fill="#ff0000"/><rect x="353" y="301" width="1" height="1" fill="#ff0000"/><rect x="358" y="301" width="1" height="1" fill="#ff0000"/><rect x="363" y="301" width="1" height="1" fill="#ff0000"/><rect x="369" y="301" width="1" height="1" fill="#ff0000"/><rect x="374" y="301" width="1" height="1" fill="#ff0000"/><rect x="379" y="301" width="1" height="1" fill="#ff0000"/><rect x="385" y="301" width="1" height="1" fill="#ff0000"/><rect x="390" y="301" width="1" height="1" fill="#ff0000"/><rect x="395" y="301" width="1" height="1" fill="#ff0000"/><rect x="401" y="301" width="1" height="1" fill="#ff0000"/><rect x="406" y="301" width="1" height="1" fill="#ff0000"/><rect x="411" y="301" width="1" height="1" fill="#ff0000"/><rect x="417" y="301" width="1" height="1" fill="#ff0000"/><rect x="422" y="301" width="1" height="1" fill="#ff0000"/><rect x="427" y="301" width="1" height="1" fill="#ff0000"/><rect x="433" y="301" width="1" height="1" fill="#ff0000"/><rect x="438" y="301" width="1" height="1" fill="#ff0000"/><rect x="443" y="301" width="1" height="1" fill="#ff0000"/><rect x="449" y="301" width="1" height="1" fill="#ff0000"/><rect x="454" y="301" width="1" height="1" fill="#ff0000"/><rect x="459" y="301" width="1" height="1" fill="#ff0000"/><rect x="465" y="301" width="1" height="1" fill="#ff0000"/><rect x="470" y="301" width="1" height="1" fill="#ff0000"/><rect x="475" y="301" width="1" height="1" fill="#ff0000"/><rect x="481" y="301" width="1" height="1" fill="#ff0000"/><rect x="486" y="301" width="1" height="1" fill="#ff0000"/><rect x="491" y="301" width="1" height="1" fill="#ff0000"/><rect x="497" y="301" width="1" height="1" fill="#ff0000"/><rect x="502" y="301" width="1" height="1" fill="#ff0000"/><rect x="507" y="301" width="1" height="1" fill="#ff0000"/><rect x="513" y="301" width="1" height="1" fill="#ff0000"/><rect x="518" y="301" width="1" height="1" fill="#ff0000"/><rect x="523" y="301" width="1" height="1" fill="#ff0000"/><rect x="529" y="301" width="1" height="1" fill="#ff0000"/><rect x="534" y="301" width="1" height="1" fill="#ff0000"/><rect x="539" y="301" width="1" height="1" fill="#ff0000"/><rect x="545" y="301" width="1" height="1" fill="#ff0000"/><rect x="550" y="301" width="1" height="1" fill="#ff0000"/><rect x="555" y="301" width="1" height="1" fill="#ff0000"/><rect x="561" y="301" width="1" height="1" fill="#ff0000"/><rect x="566" y="301" width="1" height="1" fill="#ff0000"/><rect x="571" y="301" width="1" height="1" fill="#ff0000"/><rect x="577" y="301" width="1" height="1" fill="#ff0000"/><rect x="582" y="301" width="1" height="1" fill="#ff0000"/><rect x="587" y="301" width="1" height="1" fill="#ff0000"/><rect x="593" y="301" width="1" height="1" fill="#ff0000"/><rect x="598" y="301" width="1" height="1" fill="#ff0000"/><rect x="603" y="301" width="1" height="1" fill="#ff0000"/><rect x="609" y="301" width="1" height="1" fill="#ff0000"/><rect x="614" y="301" width="1" height="1" fill="#ff0000"/><rect x="619" y="301" width="1" height="1" fill="#ff0000"/><rect x="273" y="317" width="1" height="1" fill="#ff0000"/><rect x="278" y="317" width="1" height="1" fill="#ff0000"/><rect x="283" y="317" width="1" height="1" fill="#ff0000"/><rect x="289" y="317" width="1" height="1" fill="#ff0000"/><rect x="294" y="317" width="1" height="1" fill="#ff0000"/><rect x="299" y="317" width="1" height="1" fill="#ff0000"/><rect x="305" y="317" width="1" height="1" fill="#ff0000"/><rect x="310" y="317" width="1" height="1" fill="#ff0000"/><rect x="315" y="317" width="1" height="1" fill="#ff0000"/><rect x="321" y="317" width="1" height="1" fill="#ff0000"/><rect x="326" y="317" width="1" height="1" fill="#ff0000"/><rect x="331" y="317" width="1" height="1" fill="#ff0000"/><rect x="337" y="317" width="1" height="1" fill="#ff0000"/><rect x="342" y="317" width="1" height="1" fill="#ff0000"/><rect x="347" y="317" width="1" height="1" fill="#ff0000"/><rect x="353" y="317" width="1" height="1" fill="#ff0000"/><rect x="358" y="317" width="1" height="1" fill="#ff0000"/><rect x="363" y="317" width="1" height="1" fill="#ff0000"/><rect x="369" y="317" width="1" height="1" fill="#ff0000"/><rect x="374" y="317" width="1" height="1" fill="#ff0000"/><rect x="379" y="317" width="1" height="1" fill="#ff0000"/><rect x="385" y="317" width="1" height="1" fill="#ff0000"/><rect x="390" y="317" width="1" height="1" fill="#ff0000"/><rect x="395" y="317" width="1" height="1" fill="#ff0000"/><rect x="401" y="317" width="1" height="1" fill="#ff0000"/><rect x="406" y="317" width="1" height="1" fill="#ff0000"/><rect x="411" y="317" width="1" height="1" fill="#ff0000"/><rect x="417" y="317" width="1" height="1" fill="#ff0000"/><rect x="422" y="317" width="1" height="1" fill="#ff0000"/><rect x="427" y="317" width="1" height="1" fill="#ff0000"/><rect x="433" y="317" width="1" height="1" fill="#ff0000"/><rect x="438" y="317" width="1" height="1" fill="#ff0000"/><rect x="443" y="317" width="1" height="1" fill="#ff0000"/><rect x="449" y="317" width="1" height="1" fill="#ff0000"/><rect x="454" y="317" width="1" height="1" fill="#ff0000"/><rect x="459" y="317" width="1" height="1" fill="#ff0000"/><rect x="465" y="317" width="1" height="1" fill="#ff0000"/><rect x="470" y="317" width="1" height="1" fill="#ff0000"/><rect x="475" y="317" width="1" height="1" fill="#ff0000"/><rect x="481" y="317" width="1" height="1" fill="#ff0000"/><rect x="486" y="317" width="1" height="1" fill="#ff0000"/><rect x="491" y="317" width="1" height="1" fill="#ff0000"/><rect x="497" y="317" width="1" height="1" fill="#ff0000"/><rect x="502" y="317" width="1" height="1" fill="#ff0000"/><rect x="507" y="317" width="1" height="1" fill="#ff0000"/><rect x="513" y="317" width="1" height="1" fill="#ff0000"/><rect x="518" y="317" width="1" height="1" fill="#ff0000"/><rect x="523" y="317" width="1" height="1" fill="#ff0000"/><rect x="529" y="317" width="1" height="1" fill="#ff0000"/><rect x="534" y="317" width="1" height="1" fill="#ff0000"/><rect x="539" y="317" width="1" height="1" fill="#ff0000"/><rect x="545" y="317" width="1" height="1" fill="#ff0000"/><rect x="550" y="317" width="1" height="1" fill="#ff0000"/><rect x="555" y="317" width="1" height="1" fill="#ff0000"/><rect x="561" y="317" width="1" height="1" fill="#ff0000"/><rect x="566" y="317" width="1" height="1" fill="#ff0000"/><rect x="571" y="317" width="1" height="1" fill="#ff0000"/><rect x="577" y="317" width="1" height="1" fill="#ff0000"/><rect x="582" y="317" width="1" height="1" fill="#ff0000"/><rect x="587" y="317" width="1" height="1" fill="#ff0000"/><rect x="593" y="317" width="1" height="1" fill="#ff0000"/><rect x="598" y="317" width="1" height="1" fill="#ff0000"/><rect x="603" y="317" width="1" height="1" fill="#ff0000"/><rect x="609" y="317" width="1" height="1" fill="#ff0000"/><rect x="614" y="317" width="1" height="1" fill="#ff0000"/><rect x="619" y="317" width="1" height="1" fill="#ff0000"/><rect x="273" y="333" width="1" height="1" fill="#ff0000"/><rect x="276" y="333" width="1" height="1" fill="#ff0000"/><rect x="279" y="333" width="1" height="1" fill="#ff0000"/><rect x="282" y="333" width="1" height="1" fill="#ff0000"/><rect x="285" y="333" width="1" height="1" fill="#ff0000"/><rect x="289" y="333" width="1" height="1" fill="#ff0000"/><rect x="292" y="333" width="1" height="1" fill="#ff0000"/><rect x="295" y="333" width="1" height="1" fill="#ff0000"/><rect x="298" y="333" width="1" height="1" fill="#ff0000"/><rect x="301" y="333" width="1" height="1" fill="#ff0000"/><rect x="305" y="333" width="1" height="1" fill="#ff0000"/><rect x="308" y="333" width="1" height="1" fill="#ff0000"/><rect x="311" y="333" width="1" height="1" fill="#ff0000"/><rect x="314" y="333" width="1" height="1" fill="#ff0000"/><rect x="317" y="333" width="1" height="1" fill="#ff0000"/><rect x="321" y="333" width="1" height="1" fill="#ff0000"/><rect x="324" y="333" width="1" height="1" fill="#ff0000"/><rect x="327" y="333" width="1" height="1" fill="#ff0000"/><rect x="330" y="333" width="1" height="1" fill="#ff0000"/><rect x="333" y="333" width="1" height="1" fill="#ff0000"/><rect x="337" y="333" width="1" height="1" fill="#ff0000"/><rect x="340" y="333" width="1" height="1" fill="#ff0000"/><rect x="343" y="333" width="1" height="1" fill="#ff0000"/><rect x="346" y="333" width="1" height="1" fill="#ff0000"/><rect x="349" y="333" width="1" height="1" fill="#ff0000"/><rect x="353" y="333" width="1" height="1" fill="#ff0000"/><rect x="356" y="333" width="1" height="1" fill="#ff0000"/><rect x="359" y="333" width="1" height="1" fill="#ff0000"/><rect x="362" y="333" width="1" height="1" fill="#ff0000"/><rect x="365" y="333" width="1" height="1" fill="#ff0000"/><rect x="369" y="333" width="1" height="1" fill="#ff0000"/><rect x="372" y="333" width="1" height="1" fill="#ff0000"/><rect x="375" y="333" width="1" height="1" fill="#ff0000"/><rect x="378" y="333" width="1" height="1" fill="#ff0000"/><rect x="381" y="333" width="1" height="1" fill="#ff0000"/><rect x="385" y="333" width="1" height="1" fill="#ff0000"/><rect x="388" y="333" width="1" height="1" fill="#ff0000"/><rect x="391" y="333" width="1" height="1" fill="#ff0000"/><rect x="394" y="333" width="1" height="1" fill="#ff0000"/><rect x="397" y="333" width="1" height="1" fill="#ff0000"/><rect x="401" y="333" width="1" height="1" fill="#ff0000"/><rect x="404" y="333" width="1" height="1" fill="#ff0000"/><rect x="407" y="333" width="1" height="1" fill="#ff0000"/><rect x="410" y="333" width="1" height="1" fill="#ff0000"/><rect x="413" y="333" width="1" height="1" fill="#ff0000"/><rect x="417" y="333" width="1" height="1" fill="#ff0000"/><rect x="420" y="333" width="1" height="1" fill="#ff0000"/><rect x="423" y="333" width="1" height="1" fill="#ff0000"/><rect x="426" y="333" width="1" height="1" fill="#ff0000"/><rect x="429" y="333" width="1" height="1" fill="#ff0000"/><rect x="433" y="333" width="1" height="1" fill="#ff0000"/><rect x="436" y="333" width="1" height="1" fill="#ff0000"/><rect x="439" y="333" width="1" height="1" fill="#ff0000"/><rect x="442" y="333" width="1" height="1" fill="#ff0000"/><rect x="445" y="333" width="1" height="1" fill="#ff0000"/><rect x="449" y="333" width="1" height="1" fill="#ff0000"/><rect x="452" y="333" width="1" height="1" fill="#ff0000"/><rect x="455" y="333" width="1" height="1" fill="#ff0000"/><rect x="458" y="333" width="1" height="1" fill="#ff0000"/><rect x="461" y="333" width="1" height="1" fill="#ff0000"/><rect x="465" y="333" width="1" height="1" fill="#ff0000"/><rect x="468" y="333" width="1" height="1" fill="#ff0000"/><rect x="471" y="333" width="1" height="1" fill="#ff0000"/><rect x="474" y="333" width="1" height="1" fill="#ff0000"/><rect x="477" y="333" width="1" height="1" fill="#ff0000"/><rect x="481" y="333" width="1" height="1" fill="#ff0000"/><rect x="484" y="333" width="1" height="1" fill="#ff0000"/><rect x="487" y="333" width="1" height="1" fill="#ff0000"/><rect x="490" y="333" width="1" height="1" fill="#ff0000"/><rect x="493" y="333" width="1" height="1" fill="#ff0000"/><rect x="497" y="333" width="1" height="1" fill="#ff0000"/><rect x="500" y="333" width="1" height="1" fill="#ff0000"/><rect x="503" y="333" width="1" height="1" fill="#ff0000"/><rect x="506" y="333" width="1" height="1" fill="#ff0000"/><rect x="509" y="333" width="1" height="1" fill="#ff0000"/><rect x="513" y="333" width="1" height="1" fill="#ff0000"/><rect x="516" y="333" width="1" height="1" fill="#ff0000"/><rect x="519" y="333" width="1" height="1" fill="#ff0000"/><rect x="522" y="333" width="1" height="1" fill="#ff0000"/><rect x="525" y="333" width="1" height="1" fill="#ff0000"/><rect x="529" y="333" width="1" height="1" fill="#ff0000"/><rect x="532" y="333" width="1" height="1" fill="#ff0000"/><rect x="535" y="333" width="1" height="1" fill="#ff0000"/><rect x="538" y="333" width="1" height="1" fill="#ff0000"/><rect x="541" y="333" width="1" height="1" fill="#ff0000"/><rect x="545" y="333" width="1" height="1" fill="#ff0000"/><rect x="548" y="333" width="1" height="1" fill="#ff0000"/><rect x="551" y="333" width="1" height="1" fill="#ff0000"/><rect x="554" y="333" width="1" height="1" fill="#ff0000"/><rect x="557" y="333" width="1" height="1" fill="#ff0000"/><rect x="561" y="333" width="1" height="1" fill="#ff0000"/><rect x="564" y="333" width="1" height="1" fill="#ff0000"/><rect x="567" y="333" width="1" height="1" fill="#ff0000"/><rect x="570" y="333" width="1" height="1" fill="#ff0000"/><rect x="573" y="333" width="1" height="1" fill="#ff0000"/><rect x="577" y="333" width="1" height="1" fill="#ff0000"/><rect x="580" y="333" width="1" height="1" fill="#ff0000"/><rect x="583" y="333" width="1" height="1" fill="#ff0000"/><rect x="586" y="333" width="1" height="1" fill="#ff0000"/><rect x="589" y="333" width="1" height="1" fill="#ff0000"/><rect x="593" y="333" width="1" height="1" fill="#ff0000"/><rect x="596" y="333" width="1" height="1" fill="#ff0000"/><rect x="599" y="333" width="1" height="1" fill="#ff0000"/><rect x="602" y="333" width="1" height="1" fill="#ff0000"/><rect x="605" y="333" width="1" height="1" fill="#ff0000"/><rect x="609" y="333" width="1" height="1" fill="#ff0000"/><rect x="612" y="333" width="1" height="1" fill="#ff0000"/><rect x="615" y="333" width="1" height="1" fill="#ff0000"/><rect x="618" y="333" width="1" height="1" fill="#ff0000"/><rect x="621" y="333" width="1" height="1" fill="#ff0000"/><rect x="273" y="349" width="1" height="1" fill="#ff0000"/><rect x="278" y="349" width="1" height="1" fill="#ff0000"/><rect x="283" y="349" width="1" height="1" fill="#ff0000"/><rect x="289" y="349" width="1" height="1" fill="#ff0000"/><rect x="294" y="349" width="1" height="1" fill="#ff0000"/><rect x="299" y="349" width="1" height="1" fill="#ff0000"/><rect x="305" y="349" width="1" height="1" fill="#ff0000"/><rect x="310" y="349" width="1" height="1" fill="#ff0000"/><rect x="315" y="349" width="1" height="1" fill="#ff0000"/><rect x="321" y="349" width="1" height="1" fill="#ff0000"/><rect x="326" y="349" width="1" height="1" fill="#ff0000"/><rect x="331" y="349" width="1" height="1" fill="#ff0000"/><rect x="337" y="349" width="1" height="1" fill="#ff0000"/><rect x="342" y="349" width="1" height="1" fill="#ff0000"/><rect x="347" y="349" width="1" height="1" fill="#ff0000"/><rect x="353" y="349" width="1" height="1" fill="#ff0000"/><rect x="358" y="349" width="1" height="1" fill="#ff0000"/><rect x="363" y="349" width="1" height="1" fill="#ff0000"/><rect x="369" y="349" width="1" height="1" fill="#ff0000"/><rect x="374" y="349" width="1" height="1" fill="#ff0000"/><rect x="379" y="349" width="1" height="1" fill="#ff0000"/><rect x="385" y="349" width="1" height="1" fill="#ff0000"/><rect x="390" y="349" width="1" height="1" fill="#ff0000"/><rect x="395" y="349" width="1" height="1" fill="#ff0000"/><rect x="401" y="349" width="1" height="1" fill="#ff0000"/><rect x="406" y="349" width="1" height="1" fill="#ff0000"/><rect x="411" y="349" width="1" height="1" fill="#ff0000"/><rect x="417" y="349" width="1" height="1" fill="#ff0000"/><rect x="422" y="349" width="1" height="1" fill="#ff0000"/><rect x="427" y="349" width="1" height="1" fill="#ff0000"/><rect x="433" y="349" width="1" height="1" fill="#ff0000"/><rect x="438" y="349" width="1" height="1" fill="#ff0000"/><rect x="443" y="349" width="1" height="1" fill="#ff0000"/><rect x="449" y="349" width="1" height="1" fill="#ff0000"/><rect x="454" y="349" width="1" height="1" fill="#ff0000"/><rect x="459" y="349" width="1" height="1" fill="#ff0000"/><rect x="465" y="349" width="1" height="1" fill="#ff0000"/><rect x="470" y="349" width="1" height="1" fill="#ff0000"/><rect x="475" y="349" width="1" height="1" fill="#ff0000"/><rect x="481" y="349" width="1" height="1" fill="#ff0000"/><rect x="486" y="349" width="1" height="1" fill="#ff0000"/><rect x="491" y="349" width="1" height="1" fill="#ff0000"/><rect x="497" y="349" width="1" height="1" fill="#ff0000"/><rect x="502" y="349" width="1" height="1" fill="#ff0000"/><rect x="507" y="349" width="1" height="1" fill="#ff0000"/><rect x="513" y="349" width="1" height="1" fill="#ff0000"/><rect x="518" y="349" width="1" height="1" fill="#ff0000"/><rect x="523" y="349" width="1" height="1" fill="#ff0000"/><rect x="529" y="349" width="1" height="1" fill="#ff0000"/><rect x="534" y="349" width="1" height="1" fill="#ff0000"/><rect x="539" y="349" width="1" height="1" fill="#ff0000"/><rect x="545" y="349" width="1" height="1" fill="#ff0000"/><rect x="550" y="349" width="1" height="1" fill="#ff0000"/><rect x="555" y="349" width="1" height="1" fill="#ff0000"/><rect x="561" y="349" width="1" height="1" fill="#ff0000"/><rect x="566" y="349" width="1" height="1" fill="#ff0000"/><rect x="571" y="349" width="1" height="1" fill="#ff0000"/><rect x="577" y="349" width="1" height="1" fill="#ff0000"/><rect x="582" y="349" width="1" height="1" fill="#ff0000"/><rect x="587" y="349" width="1" height="1" fill="#ff0000"/><rect x="593" y="349" width="1" height="1" fill="#ff0000"/><rect x="598" y="349" width="1" height="1" fill="#ff0000"/><rect x="603" y="349" width="1" height="1" fill="#ff0000"/><rect x="609" y="349" width="1" height="1" fill="#ff0000"/><rect x="614" y="349" width="1" height="1" fill="#ff0000"/><rect x="619" y="349" width="1" height="1" fill="#ff0000"/><rect x="273" y="365" width="1" height="1" fill="#ff0000"/><rect x="278" y="365" width="1" height="1" fill="#ff0000"/><rect x="283" y="365" width="1" height="1" fill="#ff0000"/><rect x="289" y="365" width="1" height="1" fill="#ff0000"/><rect x="294" y="365" width="1" height="1" fill="#ff0000"/><rect x="299" y="365" width="1" height="1" fill="#ff0000"/><rect x="305" y="365" width="1" height="1" fill="#ff0000"/><rect x="310" y="365" width="1" height="1" fill="#ff0000"/><rect x="315" y="365" width="1" height="1" fill="#ff0000"/><rect x="321" y="365" width="1" height="1" fill="#ff0000"/><rect x="326" y="365" width="1" height="1" fill="#ff0000"/><rect x="331" y="365" width="1" height="1" fill="#ff0000"/><rect x="337" y="365" width="1" height="1" fill="#ff0000"/><rect x="342" y="365" width="1" height="1" fill="#ff0000"/><rect x="347" y="365" width="1" height="1" fill="#ff0000"/><rect x="353" y="365" width="1" height="1" fill="#ff0000"/><rect x="358" y="365" width="1" height="1" fill="#ff0000"/><rect x="363" y="365" width="1" height="1" fill="#ff0000"/><rect x="369" y="365" width="1" height="1" fill="#ff0000"/><rect x="374" y="365" width="1" height="1" fill="#ff0000"/><rect x="379" y="365" width="1" height="1" fill="#ff0000"/><rect x="385" y="365" width="1" height="1" fill="#ff0000"/><rect x="390" y="365" width="1" height="1" fill="#ff0000"/><rect x="395" y="365" width="1" height="1" fill="#ff0000"/><rect x="401" y="365" width="1" height="1" fill="#ff0000"/><rect x="406" y="365" width="1" height="1" fill="#ff0000"/><rect x="411" y="365" width="1" height="1" fill="#ff0000"/><rect x="417" y="365" width="1" height="1" fill="#ff0000"/><rect x="422" y="365" width="1" height="1" fill="#ff0000"/><rect x="427" y="365" width="1" height="1" fill="#ff0000"/><rect x="433" y="365" width="1" height="1" fill="#ff0000"/><rect x="438" y="365" width="1" height="1" fill="#ff0000"/><rect x="443" y="365" width="1" height="1" fill="#ff0000"/><rect x="449" y="365" width="1" height="1" fill="#ff0000"/><rect x="454" y="365" width="1" height="1" fill="#ff0000"/><rect x="459" y="365" width="1" height="1" fill="#ff0000"/><rect x="465" y="365" width="1" height="1" fill="#ff0000"/><rect x="470" y="365" width="1" height="1" fill="#ff0000"/><rect x="475" y="365" width="1" height="1" fill="#ff0000"/><rect x="481" y="365" width="1" height="1" fill="#ff0000"/><rect x="486" y="365" width="1" height="1" fill="#ff0000"/><rect x="491" y="365" width="1" height="1" fill="#ff0000"/><rect x="497" y="365" width="1" height="1" fill="#ff0000"/><rect x="502" y="365" width="1" height="1" fill="#ff0000"/><rect x="507" y="365" width="1" height="1" fill="#ff0000"/><rect x="513" y="365" width="1" height="1" fill="#ff0000"/><rect x="518" y="365" width="1" height="1" fill="#ff0000"/><rect x="523" y="365" width="1" height="1" fill="#ff0000"/><rect x="529" y="365" width="1" height="1" fill="#ff0000"/><rect x="534" y="365" width="1" height="1" fill="#ff0000"/><rect x="539" y="365" width="1" height="1" fill="#ff0000"/><rect x="545" y="365" width="1" height="1" fill="#ff0000"/><rect x="550" y="365" width="1" height="1" fill="#ff0000"/><rect x="555" y="365" width="1" height="1" fill="#ff0000"/><rect x="561" y="365" width="1" height="1" fill="#ff0000"/><rect x="566" y="365" width="1" height="1" fill="#ff0000"/><rect x="571" y="365" width="1" height="1" fill="#ff0000"/><rect x="577" y="365" width="1" height="1" fill="#ff0000"/><rect x="582" y="365" width="1" height="1" fill="#ff0000"/><rect x="587" y="365" width="1" height="1" fill="#ff0000"/><rect x="593" y="365" width="1" height="1" fill="#ff0000"/><rect x="598" y="365" width="1" height="1" fill="#ff0000"/><rect x="603" y="365" width="1" height="1" fill="#ff0000"/><rect x="609" y="365" width="1" height="1" fill="#ff0000"/><rect x="614" y="365" width="1" height="1" fill="#ff0000"/><rect x="619" y="365" width="1" height="1" fill="#ff0000"/><rect x="273" y="381" width="1" height="1" fill="#ff0000"/><rect x="278" y="381" width="1" height="1" fill="#ff0000"/><rect x="283" y="381" width="1" height="1" fill="#ff0000"/><rect x="289" y="381" width="1" height="1" fill="#ff0000"/><rect x="294" y="381" width="1" height="1" fill="#ff0000"/><rect x="299" y="381" width="1" height="1" fill="#ff0000"/><rect x="305" y="381" width="1" height="1" fill="#ff0000"/><rect x="310" y="381" width="1" height="1" fill="#ff0000"/><rect x="315" y="381" width="1" height="1" fill="#ff0000"/><rect x="321" y="381" width="1" height="1" fill="#ff0000"/><rect x="326" y="381" width="1" height="1" fill="#ff0000"/><rect x="331" y="381" width="1" height="1" fill="#ff0000"/><rect x="337" y="381" width="1" height="1" fill="#ff0000"/><rect x="342" y="381" width="1" height="1" fill="#ff0000"/><rect x="347" y="381" width="1" height="1" fill="#ff0000"/><rect x="353" y="381" width="1" height="1" fill="#ff0000"/><rect x="358" y="381" width="1" height="1" fill="#ff0000"/><rect x="363" y="381" width="1" height="1" fill="#ff0000"/><rect x="369" y="381" width="1" height="1" fill="#ff0000"/><rect x="374" y="381" width="1" height="1" fill="#ff0000"/><rect x="379" y="381" width="1" height="1" fill="#ff0000"/><rect x="385" y="381" width="1" height="1" fill="#ff0000"/><rect x="390" y="381" width="1" height="1" fill="#ff0000"/><rect x="395" y="381" width="1" height="1" fill="#ff0000"/><rect x="401" y="381" width="1" height="1" fill="#ff0000"/><rect x="406" y="381" width="1" height="1" fill="#ff0000"/><rect x="411" y="381" width="1" height="1" fill="#ff0000"/><rect x="417" y="381" width="1" height="1" fill="#ff0000"/><rect x="422" y="381" width="1" height="1" fill="#ff0000"/><rect x="427" y="381" width="1" height="1" fill="#ff0000"/><rect x="433" y="381" width="1" height="1" fill="#ff0000"/><rect x="438" y="381" width="1" height="1" fill="#ff0000"/><rect x="443" y="381" width="1" height="1" fill="#ff0000"/><rect x="449" y="381" width="1" height="1" fill="#ff0000"/><rect x="454" y="381" width="1" height="1" fill="#ff0000"/><rect x="459" y="381" width="1" height="1" fill="#ff0000"/><rect x="465" y="381" width="1" height="1" fill="#ff0000"/><rect x="470" y="381" width="1" height="1" fill="#ff0000"/><rect x="475" y="381" width="1" height="1" fill="#ff0000"/><rect x="481" y="381" width="1" height="1" fill="#ff0000"/><rect x="486" y="381" width="1" height="1" fill="#ff0000"/><rect x="491" y="381" width="1" height="1" fill="#ff0000"/><rect x="497" y="381" width="1" height="1" fill="#ff0000"/><rect x="502" y="381" width="1" height="1" fill="#ff0000"/><rect x="507" y="381" width="1" height="1" fill="#ff0000"/><rect x="513" y="381" width="1" height="1" fill="#ff0000"/><rect x="518" y="381" width="1" height="1" fill="#ff0000"/><rect x="523" y="381" width="1" height="1" fill="#ff0000"/><rect x="529" y="381" width="1" height="1" fill="#ff0000"/><rect x="534" y="381" width="1" height="1" fill="#ff0000"/><rect x="539" y="381" width="1" height="1" fill="#ff0000"/><rect x="545" y="381" width="1" height="1" fill="#ff0000"/><rect x="550" y="381" width="1" height="1" fill="#ff0000"/><rect x="555" y="381" width="1" height="1" fill="#ff0000"/><rect x="561" y="381" width="1" height="1" fill="#ff0000"/><rect x="566" y="381" width="1" height="1" fill="#ff0000"/><rect x="571" y="381" width="1" height="1" fill="#ff0000"/><rect x="577" y="381" width="1" height="1" fill="#ff0000"/><rect x="582" y="381" width="1" height="1" fill="#ff0000"/><rect x="587" y="381" width="1" height="1" fill="#ff0000"/><rect x="593" y="381" width="1" height="1" fill="#ff0000"/><rect x="598" y="381" width="1" height="1" fill="#ff0000"/><rect x="603" y="381" width="1" height="1" fill="#ff0000"/><rect x="609" y="381" width="1" height="1" fill="#ff0000"/><rect x="614" y="381" width="1" height="1" fill="#ff0000"/><rect x="619" y="381" width="1" height="1" fill="#ff0000"/><rect x="273" y="397" width="1" height="1" fill="#ff0000"/><rect x="278" y="397" width="1" height="1" fill="#ff0000"/><rect x="283" y="397" width="1" height="1" fill="#ff0000"/><rect x="289" y="397" width="1" height="1" fill="#ff0000"/><rect x="294" y="397" width="1" height="1" fill="#ff0000"/><rect x="299" y="397" width="1" height="1" fill="#ff0000"/><rect x="305" y="397" width="1" height="1" fill="#ff0000"/><rect x="310" y="397" width="1" height="1" fill="#ff0000"/><rect x="315" y="397" width="1" height="1" fill="#ff0000"/><rect x="321" y="397" width="1" height="1" fill="#ff0000"/><rect x="326" y="397" width="1" height="1" fill="#ff0000"/><rect x="331" y="397" width="1" height="1" fill="#ff0000"/><rect x="337" y="397" width="1" height="1" fill="#ff0000"/><rect x="342" y="397" width="1" height="1" fill="#ff0000"/><rect x="347" y="397" width="1" height="1" fill="#ff0000"/><rect x="353" y="397" width="1" height="1" fill="#ff0000"/><rect x="358" y="397" width="1" height="1" fill="#ff0000"/><rect x="363" y="397" width="1" height="1" fill="#ff0000"/><rect x="369" y="397" width="1" height="1" fill="#ff0000"/><rect x="374" y="397" width="1" height="1" fill="#ff0000"/><rect x="379" y="397" width="1" height="1" fill="#ff0000"/><rect x="385" y="397" width="1" height="1" fill="#ff0000"/><rect x="390" y="397" width="1" height="1" fill="#ff0000"/><rect x="395" y="397" width="1" height="1" fill="#ff0000"/><rect x="401" y="397" width="1" height="1" fill="#ff0000"/><rect x="406" y="397" width="1" height="1" fill="#ff0000"/><rect x="411" y="397" width="1" height="1" fill="#ff0000"/><rect x="417" y="397" width="1" height="1" fill="#ff0000"/><rect x="422" y="397" width="1" height="1" fill="#ff0000"/><rect x="427" y="397" width="1" height="1" fill="#ff0000"/><rect x="433" y="397" width="1" height="1" fill="#ff0000"/><rect x="438" y="397" width="1" height="1" fill="#ff0000"/><rect x="443" y="397" width="1" height="1" fill="#ff0000"/><rect x="449" y="397" width="1" height="1" fill="#ff0000"/><rect x="454" y="397" width="1" height="1" fill="#ff0000"/><rect x="459" y="397" width="1" height="1" fill="#ff0000"/><rect x="465" y="397" width="1" height="1" fill="#ff0000"/><rect x="470" y="397" width="1" height="1" fill="#ff0000"/><rect x="475" y="397" width="1" height="1" fill="#ff0000"/><rect x="481" y="397" width="1" height="1" fill="#ff0000"/><rect x="486" y="397" width="1" height="1" fill="#ff0000"/><rect x="491" y="397" width="1" height="1" fill="#ff0000"/><rect x="497" y="397" width="1" height="1" fill="#ff0000"/><rect x="502" y="397" width="1" height="1" fill="#ff0000"/><rect x="507" y="397" width="1" height="1" fill="#ff0000"/><rect x="513" y="397" width="1" height="1" fill="#ff0000"/><rect x="518" y="397" width="1" height="1" fill="#ff0000"/><rect x="523" y="397" width="1" height="1" fill="#ff0000"/><rect x="529" y="397" width="1" height="1" fill="#ff0000"/><rect x="534" y="397" width="1" height="1" fill="#ff0000"/><rect x="539" y="397" width="1" height="1" fill="#ff0000"/><rect x="545" y="397" width="1" height="1" fill="#ff0000"/><rect x="550" y="397" width="1" height="1" fill="#ff0000"/><rect x="555" y="397" width="1" height="1" fill="#ff0000"/><rect x="561" y="397" width="1" height="1" fill="#ff0000"/><rect x="566" y="397" width="1" height="1" fill="#ff0000"/><rect x="571" y="397" width="1" height="1" fill="#ff0000"/><rect x="577" y="397" width="1" height="1" fill="#ff0000"/><rect x="582" y="397" width="1" height="1" fill="#ff0000"/><rect x="587" y="397" width="1" height="1" fill="#ff0000"/><rect x="593" y="397" width="1" height="1" fill="#ff0000"/><rect x="598" y="397" width="1" height="1" fill="#ff0000"/><rect x="603" y="397" width="1" height="1" fill="#ff0000"/><rect x="609" y="397" width="1" height="1" fill="#ff0000"/><rect x="614" y="397" width="1" height="1" fill="#ff0000"/><rect x="619" y="397" width="1" height="1" fill="#ff0000"/><rect x="335" y="333" width="11" height="65" fill="#00ff00"/><rect x="339" y="333" width="11" height="65" fill="#ffff00"/><rect x="339" y="333" width="7" height="65" fill="#00ffff"/><rect x="370" y="371" width="11" height="27" fill="#00ff00"/><rect x="374" y="344" width="11" height="54" fill="#ffff00"/><rect x="374" y="371" width="7" height="27" fill="#00ffff"/><rect x="405" y="355" width="11" height="43" fill="#00ff00"/><rect x="409" y="351" width="11" height="47" fill="#ffff00"/><rect x="409" y="355" width="7" height="43" fill="#00ffff"/><rect x="441" y="361" width="11" height="37" fill="#00ff00"/><rect x="445" y="350" width="11" height="48" fill="#ffff00"/><rect x="445" y="361" width="7" height="37" fill="#00ffff"/><rect x="476" y="368" width="11" height="30" fill="#00ff00"/><rect x="480" y="363" width="11" height="35" fill="#ffff00"/><rect x="480" y="368" width="7" height="30" fill="#00ffff"/><rect x="511" y="377" width="11" height="21" fill="#00ff00"/><rect x="515" y="379" width="11" height="19" fill="#ffff00"/><rect x="515" y="379" width="7" height="19" fill="#00ffff"/><rect x="546" y="371" width="11" height="27" fill="#00ff00"/><rect x="550" y="369" width="11" height="29" fill="#ffff00"/><rect x="550" y="371" width="7" height="27" fill="#00ffff"/><rect x="581" y="362" width="11" height="36" fill="#00ff00"/><rect x="585" y="364" width="11" height="34" fill="#ffff00"/><rect x="585" y="364" width="7" height="34" fill="#00ffff"/><rect x="300" y="173" width="1" height="225" fill="#00ff00"/><rect x="310" y="173" width="1" height="225" fill="#00ff00"/><rect x="304" y="173" width="1" height="225" fill="#ffff00"/><rect x="314" y="173" width="1" height="225" fill="#ffff00"/><rect x="300" y="173" width="5" height="1" fill="#00ff00"/><rect x="305" y="173" width="5" height="1" fill="#00ffff"/><rect x="310" y="173" width="5" height="1" fill="#ffff00"/><rect x="301" y="173" width="1" height="1" fill="#c000ff"/><rect x="305" y="173" width="1" height="1" fill="#000000"/><rect x="308" y="173" width="1" height="1" fill="#000000"/><rect x="311" y="173" width="1" height="1" fill="#0000c0"/><rect x="314" y="173" width="1" height="1" fill="#0000c0"/><rect x="310" y="189" width="1" height="1" fill="#c000ff"/><rect x="310" y="205" width="1" height="1" fill="#c000ff"/><rect x="310" y="221" width="1" height="1" fill="#c000ff"/><rect x="310" y="237" width="1" height="1" fill="#c000ff"/><rect x="310" y="253" width="1" height="1" fill="#c000ff"/><rect x="310" y="269" width="1" height="1" fill="#c000ff"/><rect x="310" y="285" width="1" height="1" fill="#c000ff"/><rect x="310" y="301" width="1" height="1" fill="#c000ff"/><rect x="310" y="317" width="1" height="1" fill="#c000ff"/><rect x="314" y="333" width="1" height="1" fill="#0000c0"/><rect x="337" y="333" width="1" height="1" fill="#c000ff"/><rect x="340" y="333" width="1" height="1" fill="#000000"/><rect x="343" y="333" width="1" height="1" fill="#000000"/><rect x="346" y="333" width="1" height="1" fill="#0000c0"/><rect x="349" y="333" width="1" height="1" fill="#0000c0"/><rect x="310" y="349" width="1" height="1" fill="#c000ff"/><rect x="337" y="349" width="1" height="1" fill="#c000ff"/><rect x="342" y="349" width="1" height="1" fill="#000000"/><rect x="347" y="349" width="1" height="1" fill="#0000c0"/><rect x="374" y="349" width="1" height="1" fill="#0000c0"/><rect x="379" y="349" width="1" height="1" fill="#0000c0"/><rect x="310" y="365" width="1" height="1" fill="#c000ff"/><rect x="337" y="365" width="1" height="1" fill="#c000ff"/><rect x="342" y="365" width="1" height="1" fill="#000000"/><rect x="347" y="365" width="1" height="1" fill="#0000c0"/><rect x="374" y="365" width="1" height="1" fill="#0000c0"/><rect x="379" y="365" width="1" height="1" fill="#0000c0"/><rect x="406" y="365" width="1" height="1" fill="#c000ff"/><rect x="411" y="365" width="1" height="1" fill="#000000"/><rect x="417" y="365" width="1" height="1" fill="#0000c0"/><rect x="443" y="365" width="1" height="1" fill="#c000ff"/><rect x="449" y="365" width="1" height="1" fill="#000000"/><rect x="454" y="365" width="1" height="1" fill="#0000c0"/><rect x="481" y="365" width="1" height="1" fill="#0000c0"/><rect x="486" y="365" width="1" height="1" fill="#0000c0"/><rect x="582" y="365" width="1" height="1" fill="#c000ff"/><rect x="587" y="365" width="1" height="1" fill="#000000"/><rect x="593" y="365" width="1" height="1" fill="#0000c0"/><rect x="310" y="381" width="1" height="1" fill="#c000ff"/><rect x="337" y="381" width="1" height="1" fill="#c000ff"/><rect x="342" y="381" width="1" height="1" fill="#000000"/><rect x="347" y="381" width="1" height="1" fill="#0000c0"/><rect x="374" y="381" width="1" height="1" fill="#000000"/><rect x="379" y="381" width="1" height="1" fill="#000000"/><rect x="406" y="381" width="1" height="1" fill="#c000ff"/><rect x="411" y="381" width="1" height="1" fill="#000000"/><rect x="417" y="381" width="1" height="1" fill="#0000c0"/><rect x="443" y="381" width="1" height="1" fill="#c000ff"/><rect x="449" y="381" width="1" height="1" fill="#000000"/><rect x="454" y="381" width="1" height="1" fill="#0000c0"/><rect x="481" y="381" width="1" height="1" fill="#000000"/><rect x="486" y="381" width="1" height="1" fill="#000000"/><rect x="513" y="381" width="1" height="1" fill="#c000ff"/><rect x="518" y="381" width="1" height="1" fill="#000000"/><rect x="523" y="381" width="1" height="1" fill="#0000c0"/><rect x="550" y="381" width="1" height="1" fill="#000000"/><rect x="555" y="381" width="1" height="1" fill="#000000"/><rect x="582" y="381" width="1" height="1" fill="#c000ff"/><rect x="587" y="381" width="1" height="1" fill="#000000"/><rect x="593" y="381" width="1" height="1" fill="#0000c0"/><rect x="310" y="397" width="1" height="1" fill="#c000ff"/><rect x="337" y="397" width="1" height="1" fill="#c000ff"/><rect x="342" y="397" width="1" height="1" fill="#000000"/><rect x="347" y="397" width="1" height="1" fill="#0000c0"/><rect x="374" y="397" width="1" height="1" fill="#000000"/><rect x="379" y="397" width="1" height="1" fill="#000000"/><rect x="406" y="397" width="1" height="1" fill="#c000ff"/><rect x="411" y="397" width="1" height="1" fill="#000000"/><rect x="417" y="397" width="1" height="1" fill="#0000c0"/><rect x="443" y="397" width="1" height="1" fill="#c000ff"/><rect x="449" y="397" width="1" height="1" fill="#000000"/><rect x="454" y="397" width="1" height="1" fill="#0000c0"/><rect x="481" y="397" width="1" height="1" fill="#000000"/><rect x="486" y="397" width="1" height="1" fill="#000000"/><rect x="513" y="397" width="1" height="1" fill="#c000ff"/><rect x="518" y="397" width="1" height="1" fill="#000000"/><rect x="523" y="397" width="1" height="1" fill="#0000c0"/><rect x="550" y="397" width="1" height="1" fill="#000000"/><rect x="555" y="397" width="1" height="1" fill="#000000"/><rect x="582" y="397" width="1" height="1" fill="#c000ff"/><rect x="587" y="397" width="1" height="1" fill="#000000"/><rect x="593" y="397" width="1" height="1" fill="#0000c0"/><rect x="339" y="174" width="1" height="159" fill="#fff"/><rect x="339" y="333" width="1" height="49" fill="#000"/><rect x="337" y="385" width="1" height="1" fill="#0000ff"/><rect x="338" y="385" width="1" height="1" fill="#0000ff"/><rect x="339" y="385" width="1" height="1" fill="#000"/><rect x="340" y="385" width="1" height="1" fill="#000"/><rect x="341" y="385" width="1" height="1" fill="#000"/><rect x="337" y="393" width="1" height="1" fill="#0000ff"/><rect x="338" y="393" width="1" height="1" fill="#0000ff"/><rect x="339" y="393" width="1" height="1" fill="#000"/><rect x="340" y="393" width="1" height="1" fill="#000"/><rect x="341" y="393" width="1" height="1" fill="#000"/><rect x="335" y="388" width="1" height="1" fill="#0000ff"/><rect x="335" y="389" width="1" height="1" fill="#0000ff"/><rect x="335" y="390" width="1" height="1" fill="#0000ff"/><rect x="336" y="386" width="1" height="1" fill="#0000ff"/><rect x="336" y="387" width="1" height="1" fill="#0000ff"/><rect x="336" y="391" width="1" height="1" fill="#0000ff"/><rect x="336" y="392" width="1" height="1" fill="#0000ff"/><rect x="342" y="386" width="1" height="1" fill="#000"/><rect x="342" y="387" width="1" height="1" fill="#000"/><rect x="342" y="391" width="1" height="1" fill="#000"/><rect x="342" y="392" width="1" height="1" fill="#000"/><rect x="343" y="388" width="1" height="1" fill="#000"/><rect x="343" y="389" width="1" height="1" fill="#000"/><rect x="343" y="390" width="1" height="1" fill="#000"/><rect x="344" y="389" width="1" height="1" fill="#000"/></svg>
<span class="t" style="left:127.5px;top:12px;color:#000;">THD 23456789</span><span class="t" style="left:263.5px;top:12px;color:#000;">Input RMS</span><span class="g" style="left:95px;top:32px;color:#000;">CH1</span><span class="g" style="left:95px;top:64px;color:#000;">CH2</span><span class="g" style="left:135px;top:32px;color:#00ff00;">0.0011291</span><span class="g" style="left:135px;top:64px;color:#00ff00;">0.0012907</span><span class="g" style="left:255px;top:32px;color:#00ff00;">0.9678  V</span><span class="g" style="left:255px;top:64px;color:#00ff00;">0.9703  V</span><span class="g" style="left:407px;top:32px;color:#00ff00;">OFF</span><span class="g" style="left:407px;top:64px;color:#00ff00;">OFF</span><span class="t" style="left:495.5px;top:12px;color:#000;">GEN RUNNING</span><span class="t" style="left:495.5px;top:28px;color:#000;">ANL 1:CONT 2:CONT</span><span class="t" style="left:495.5px;top:44px;color:#000;">SWP OFF</span><span class="t" style="left:495.5px;top:64px;color:#000;">Feb 01 2016</span><span class="t" style="left:495.5px;top:80px;color:#000;">Mon 11:35:48</span><span class="t" style="left:71.5px;top:112px;color:#000;">ANALYZER</span><span class="t" style="left:23.5px;top:128px;color:#0000ff;">INSTRUMENT</span><span class="t" style="left:111.5px;top:128px;color:#000;">ANLG  22kHz</span><span class="t" style="left:23.5px;top:144px;color:#000;">Min Freq</span><span class="t" style="left:111.5px;top:144px;color:#00ff00;">10 Hz</span><span class="t" style="left:23.5px;top:160px;color:#000;">Ref Imped</span><span class="t" style="left:111.5px;top:160px;color:#000;">600.00 &#937;</span><span class="t" style="left:23.5px;top:176px;color:#000;">Channel</span><span class="t" style="left:111.5px;top:176px;color:#000;">2 &#8801; 1</span><span class="t" style="left:23.5px;top:192px;color:#000;">Coupling</span><span class="t" style="left:111.5px;top:192px;color:#000;">DC</span><span class="t" style="left:23.5px;top:208px;color:#000;">Input</span><span class="t" style="left:111.5px;top:208px;color:#000;">BAL</span><span class="t" style="left:23.5px;top:224px;color:#000;">Impedance</span><span class="t" style="left:111.5px;top:224px;color:#fff;">300 &#937;</span><span class="t" style="left:23.5px;top:240px;color:#000;">Common</span><span class="t" style="left:111.5px;top:240px;color:#000;">GROUND</span><span class="t" style="left:23.5px;top:256px;color:#000;">Range</span><span class="t" style="left:111.5px;top:256px;color:#000;">AUTO</span><span class="t" style="left:23.5px;top:288px;color:#0000ff;">START COND</span><span class="t" style="left:111.5px;top:288px;color:#000;">AUTO</span><span class="t" style="left:23.5px;top:304px;color:#000;">Delay</span><span class="t" style="left:111.5px;top:304px;color:#000;">0.0000 s</span><span class="t" style="left:23.5px;top:336px;color:#0000ff;">INPUT DISP</span><span class="t" style="left:111.5px;top:336px;color:#000;">RMS</span><span class="t" style="left:23.5px;top:352px;color:#000;">Unit Ch1</span><span class="t" style="left:111.5px;top:352px;color:#000;">V</span><span class="t" style="left:23.5px;top:368px;color:#000;">Unit Ch2</span><span class="t" style="left:111.5px;top:368px;color:#000;">V</span><span class="t" style="left:23.5px;top:384px;color:#000;">Reference</span><span class="t" style="left:111.5px;top:384px;color:#000;">GEN TRACK</span><span class="t" style="left:295.5px;top:112px;color:#000;">o<span class="pp">(</span>A<span class="pp">)</span></span><span class="t" style="left:423.5px;top:112px;color:#000;">o<span class="pp">(</span>X<span class="pp">)</span></span><span class="t" style="left:567.5px;top:112px;color:#000;">o<span class="pp">(</span>B<span class="pp">)</span></span><span class="t" style="left:271.5px;top:132px;color:#00ff00;">&#8722; 99.26 dB</span><span class="t" style="left:399.5px;top:132px;color:#00ff00;">2.00001 kHz</span><span class="t" style="left:519.5px;top:132px;color:#ffff00;">&#8722; 99.14 dB</span><span class="t" style="left:223.5px;top:153px;color:#000;">dB</span><span class="t" style="left:287.5px;top:153px;color:#000;">THD</span><span class="t" style="left:335.5px;top:153px;color:#000;">CH1,</span><span class="t" style="left:391.5px;top:153px;color:#ffff00;">THD</span><span class="t" style="left:439.5px;top:153px;color:#ffff00;">CH2</span><span class="t" style="left:471.5px;top:153px;color:#000;">vs</span><span class="t" style="left:511.5px;top:153px;color:#000;">FREQUENCY/Hz</span><span class="t" style="left:255.5px;top:166px;color:#000;">0</span><span class="t" style="left:239.5px;top:214px;color:#000;">&#8722;30</span><span class="t" style="left:239.5px;top:246px;color:#000;">&#8722;50</span><span class="t" style="left:239.5px;top:294px;color:#000;">&#8722;80</span><span class="t" style="left:231.5px;top:326px;color:#000;">&#8722;100</span><span class="t" style="left:231.5px;top:358px;color:#000;">&#8722;120</span><span class="t" style="left:231.5px;top:390px;color:#000;">&#8722;140</span><span class="t" style="left:295.5px;top:404px;color:#000;">f1</span><span class="t" style="left:335.5px;top:404px;color:#000;">d2</span><span class="t" style="left:367.5px;top:404px;color:#000;">d3</span><span class="t" style="left:407.5px;top:404px;color:#000;">d4</span><span class="t" style="left:439.5px;top:404px;color:#000;">d5</span><span class="t" style="left:479.5px;top:404px;color:#000;">d6</span><span class="t" style="left:511.5px;top:404px;color:#000;">d7</span><span class="t" style="left:551.5px;top:404px;color:#000;">d8</span><span class="t" style="left:583.5px;top:404px;color:#000;">d9</span>
<svg class="a" width="100" height="105" style="left:0;top:0"><polyline points="13.25,52.5 50.5,15.25" fill="none" stroke="#fff" stroke-width="1.9"/><polyline points="88.1,52.5 50.5,90.1" fill="none" stroke="#000" stroke-width="2.3"/><polygon points="50.5,13.5 89.5,52.5 50.5,91.5 11.5,52.5" fill="none" stroke="#000" stroke-width="1"/><polyline points="50.5,16.5 86.5,52.5" fill="none" stroke="#000" stroke-width="1" /><polyline points="14.5,52.5 50.5,88.5" fill="none" stroke="#000" stroke-width="1"/><polygon points="50.5,21.5 81.5,52.5 50.5,83.5 19.5,52.5" fill="none" stroke="#000" stroke-width="1.3"/><path d="M36 66 C 41 61.5, 46.5 57.5, 50.5 51.5 S 57.5 40.5, 64 38.5" transform="translate(-1.1,-1.1)" fill="none" stroke="#fff" stroke-width="1"/><path d="M36 66 C 41 61.5, 46.5 57.5, 50.5 51.5 S 57.5 40.5, 64 38.5" transform="translate(1.1,1.1)" fill="none" stroke="#fff" stroke-width="1"/><path d="M36 66 C 41 61.5, 46.5 57.5, 50.5 51.5 S 57.5 40.5, 64 38.5" transform="translate(-2.2,-2.2)" fill="none" stroke="#000" stroke-width="1.05"/><path d="M36 66 C 41 61.5, 46.5 57.5, 50.5 51.5 S 57.5 40.5, 64 38.5" transform="translate(0,0)" fill="none" stroke="#000" stroke-width="1.05"/><path d="M36 66 C 41 61.5, 46.5 57.5, 50.5 51.5 S 57.5 40.5, 64 38.5" transform="translate(2.2,2.2)" fill="none" stroke="#000" stroke-width="1.05"/></svg>
<svg class="a" width="640" height="105" style="left:0;top:0" shape-rendering="crispEdges"><rect x="592" y="10" width="1" height="1" fill="#000"/><rect x="605" y="10" width="1" height="1" fill="#000"/><rect x="593" y="11" width="1" height="1" fill="#000"/><rect x="596" y="11" width="1" height="1" fill="#000"/><rect x="597" y="11" width="1" height="1" fill="#000"/><rect x="598" y="11" width="1" height="1" fill="#000"/><rect x="599" y="11" width="1" height="1" fill="#000"/><rect x="600" y="11" width="1" height="1" fill="#000"/><rect x="601" y="11" width="1" height="1" fill="#000"/><rect x="604" y="11" width="1" height="1" fill="#000"/><rect x="594" y="12" width="1" height="1" fill="#000"/><rect x="595" y="12" width="1" height="1" fill="#000"/><rect x="596" y="12" width="1" height="1" fill="#000"/><rect x="597" y="12" width="1" height="1" fill="#000"/><rect x="598" y="12" width="1" height="1" fill="#000"/><rect x="599" y="12" width="1" height="1" fill="#000"/><rect x="600" y="12" width="1" height="1" fill="#000"/><rect x="601" y="12" width="1" height="1" fill="#000"/><rect x="602" y="12" width="1" height="1" fill="#000"/><rect x="603" y="12" width="1" height="1" fill="#000"/><rect x="594" y="13" width="1" height="1" fill="#000"/><rect x="595" y="13" width="1" height="1" fill="#000"/><rect x="596" y="13" width="1" height="1" fill="#000"/><rect x="601" y="13" width="1" height="1" fill="#000"/><rect x="602" y="13" width="1" height="1" fill="#000"/><rect x="603" y="13" width="1" height="1" fill="#000"/><rect x="594" y="14" width="1" height="1" fill="#000"/><rect x="595" y="14" width="1" height="1" fill="#000"/><rect x="596" y="14" width="1" height="1" fill="#000"/><rect x="601" y="14" width="1" height="1" fill="#000"/><rect x="602" y="14" width="1" height="1" fill="#000"/><rect x="603" y="14" width="1" height="1" fill="#000"/><rect x="593" y="15" width="1" height="1" fill="#000"/><rect x="594" y="15" width="1" height="1" fill="#000"/><rect x="595" y="15" width="1" height="1" fill="#000"/><rect x="596" y="15" width="1" height="1" fill="#f0f0f0"/><rect x="597" y="15" width="1" height="1" fill="#000"/><rect x="600" y="15" width="1" height="1" fill="#000"/><rect x="601" y="15" width="1" height="1" fill="#f0f0f0"/><rect x="602" y="15" width="1" height="1" fill="#000"/><rect x="603" y="15" width="1" height="1" fill="#000"/><rect x="604" y="15" width="1" height="1" fill="#000"/><rect x="592" y="16" width="1" height="1" fill="#000"/><rect x="593" y="16" width="1" height="1" fill="#000"/><rect x="594" y="16" width="1" height="1" fill="#000"/><rect x="595" y="16" width="1" height="1" fill="#f0f0f0"/><rect x="596" y="16" width="1" height="1" fill="#f0f0f0"/><rect x="597" y="16" width="1" height="1" fill="#000"/><rect x="599" y="16" width="1" height="1" fill="#000"/><rect x="600" y="16" width="1" height="1" fill="#000"/><rect x="601" y="16" width="1" height="1" fill="#f0f0f0"/><rect x="602" y="16" width="1" height="1" fill="#f0f0f0"/><rect x="603" y="16" width="1" height="1" fill="#000"/><rect x="604" y="16" width="1" height="1" fill="#000"/><rect x="605" y="16" width="1" height="1" fill="#000"/><rect x="592" y="17" width="1" height="1" fill="#000"/><rect x="593" y="17" width="1" height="1" fill="#000"/><rect x="594" y="17" width="1" height="1" fill="#f0f0f0"/><rect x="595" y="17" width="1" height="1" fill="#f0f0f0"/><rect x="596" y="17" width="1" height="1" fill="#000"/><rect x="598" y="17" width="1" height="1" fill="#000"/><rect x="599" y="17" width="1" height="1" fill="#000"/><rect x="600" y="17" width="1" height="1" fill="#000"/><rect x="602" y="17" width="1" height="1" fill="#000"/><rect x="603" y="17" width="1" height="1" fill="#f0f0f0"/><rect x="604" y="17" width="1" height="1" fill="#f0f0f0"/><rect x="605" y="17" width="1" height="1" fill="#000"/><rect x="606" y="17" width="1" height="1" fill="#000"/><rect x="592" y="18" width="1" height="1" fill="#000"/><rect x="593" y="18" width="1" height="1" fill="#f0f0f0"/><rect x="594" y="18" width="1" height="1" fill="#f0f0f0"/><rect x="595" y="18" width="1" height="1" fill="#f0f0f0"/><rect x="596" y="18" width="1" height="1" fill="#000"/><rect x="597" y="18" width="1" height="1" fill="#000"/><rect x="601" y="18" width="1" height="1" fill="#000"/><rect x="602" y="18" width="1" height="1" fill="#000"/><rect x="603" y="18" width="1" height="1" fill="#f0f0f0"/><rect x="604" y="18" width="1" height="1" fill="#f0f0f0"/><rect x="605" y="18" width="1" height="1" fill="#f0f0f0"/><rect x="606" y="18" width="1" height="1" fill="#000"/><rect x="592" y="19" width="1" height="1" fill="#000"/><rect x="593" y="19" width="1" height="1" fill="#000"/><rect x="594" y="19" width="1" height="1" fill="#f0f0f0"/><rect x="595" y="19" width="1" height="1" fill="#f0f0f0"/><rect x="596" y="19" width="1" height="1" fill="#000"/><rect x="597" y="19" width="1" height="1" fill="#000"/><rect x="601" y="19" width="1" height="1" fill="#000"/><rect x="602" y="19" width="1" height="1" fill="#000"/><rect x="603" y="19" width="1" height="1" fill="#f0f0f0"/><rect x="604" y="19" width="1" height="1" fill="#f0f0f0"/><rect x="605" y="19" width="1" height="1" fill="#000"/><rect x="606" y="19" width="1" height="1" fill="#000"/><rect x="593" y="20" width="1" height="1" fill="#000"/><rect x="594" y="20" width="1" height="1" fill="#000"/><rect x="595" y="20" width="1" height="1" fill="#000"/><rect x="596" y="20" width="1" height="1" fill="#000"/><rect x="602" y="20" width="1" height="1" fill="#000"/><rect x="603" y="20" width="1" height="1" fill="#000"/><rect x="604" y="20" width="1" height="1" fill="#000"/><rect x="605" y="20" width="1" height="1" fill="#000"/><rect x="594" y="21" width="1" height="1" fill="#000"/><rect x="595" y="21" width="1" height="1" fill="#000"/><rect x="596" y="21" width="1" height="1" fill="#000"/><rect x="602" y="21" width="1" height="1" fill="#000"/><rect x="603" y="21" width="1" height="1" fill="#000"/><rect x="604" y="21" width="1" height="1" fill="#000"/><rect x="593" y="22" width="1" height="1" fill="#000"/><rect x="595" y="22" width="1" height="1" fill="#000"/><rect x="596" y="22" width="1" height="1" fill="#000"/><rect x="602" y="22" width="1" height="1" fill="#000"/><rect x="603" y="22" width="1" height="1" fill="#000"/><rect x="605" y="22" width="1" height="1" fill="#000"/><rect x="592" y="23" width="1" height="1" fill="#000"/><rect x="605" y="23" width="1" height="1" fill="#000"/><path d="M610.5 10.5 L624 24 M624 10.5 L610.5 24" stroke="#000" stroke-width="1.1"/><rect x="612.5" y="13.2" width="4.8" height="7.6" stroke="#000" stroke-width="1.6" fill="#c0c0c0"/><path d="M617.5 14.5 L620.5 10.5 L620.5 24 L617.5 19.5" stroke="#000" stroke-width="1.2" fill="none"/><rect x="627" y="67" width="1" height="1" fill="#000"/><rect x="628" y="67" width="1" height="1" fill="#000"/><rect x="625" y="68" width="1" height="1" fill="#000"/><rect x="626" y="68" width="1" height="1" fill="#000"/><rect x="627" y="68" width="1" height="1" fill="#000"/><rect x="628" y="68" width="1" height="1" fill="#000"/><rect x="629" y="68" width="1" height="1" fill="#000"/><rect x="630" y="68" width="1" height="1" fill="#000"/><rect x="625" y="69" width="1" height="1" fill="#000"/><rect x="626" y="69" width="1" height="1" fill="#e4e4e4"/><rect x="627" y="69" width="1" height="1" fill="#000"/><rect x="628" y="69" width="1" height="1" fill="#000"/><rect x="629" y="69" width="1" height="1" fill="#000"/><rect x="630" y="69" width="1" height="1" fill="#000"/><rect x="631" y="69" width="1" height="1" fill="#000"/><rect x="624" y="70" width="1" height="1" fill="#000"/><rect x="625" y="70" width="1" height="1" fill="#000"/><rect x="626" y="70" width="1" height="1" fill="#e4e4e4"/><rect x="627" y="70" width="1" height="1" fill="#e4e4e4"/><rect x="628" y="70" width="1" height="1" fill="#000"/><rect x="629" y="70" width="1" height="1" fill="#000"/><rect x="630" y="70" width="1" height="1" fill="#000"/><rect x="631" y="70" width="1" height="1" fill="#000"/><rect x="624" y="71" width="1" height="1" fill="#000"/><rect x="626" y="71" width="1" height="1" fill="#e4e4e4"/><rect x="627" y="71" width="1" height="1" fill="#e4e4e4"/><rect x="628" y="71" width="1" height="1" fill="#e4e4e4"/><rect x="629" y="71" width="1" height="1" fill="#000"/><rect x="630" y="71" width="1" height="1" fill="#000"/><rect x="631" y="71" width="1" height="1" fill="#000"/><rect x="625" y="72" width="1" height="1" fill="#000"/><rect x="627" y="72" width="1" height="1" fill="#e4e4e4"/><rect x="628" y="72" width="1" height="1" fill="#e4e4e4"/><rect x="629" y="72" width="1" height="1" fill="#000"/><rect x="630" y="72" width="1" height="1" fill="#000"/><rect x="625" y="73" width="1" height="1" fill="#000"/><rect x="626" y="73" width="1" height="1" fill="#000"/><rect x="628" y="73" width="1" height="1" fill="#e4e4e4"/><rect x="629" y="73" width="1" height="1" fill="#000"/><rect x="630" y="73" width="1" height="1" fill="#000"/><rect x="627" y="74" width="1" height="1" fill="#000"/><rect x="628" y="74" width="1" height="1" fill="#000"/><rect x="637" y="1" width="1" height="1" fill="#fff"/><rect x="638" y="0" width="2" height="1" fill="#fff"/></svg>
<span class="lg" style="left:40px;top:31px">R</span><span class="lg" style="left:55.5px;top:47px">S</span>
<span class="wm" style="left:3px;top:406px;font-size:14px">&#169;</span><span class="wm" style="left:16px;top:406px;transform:scaleX(0.79);transform-origin:0 0">KenRockwell.com</span>
</body></html>
